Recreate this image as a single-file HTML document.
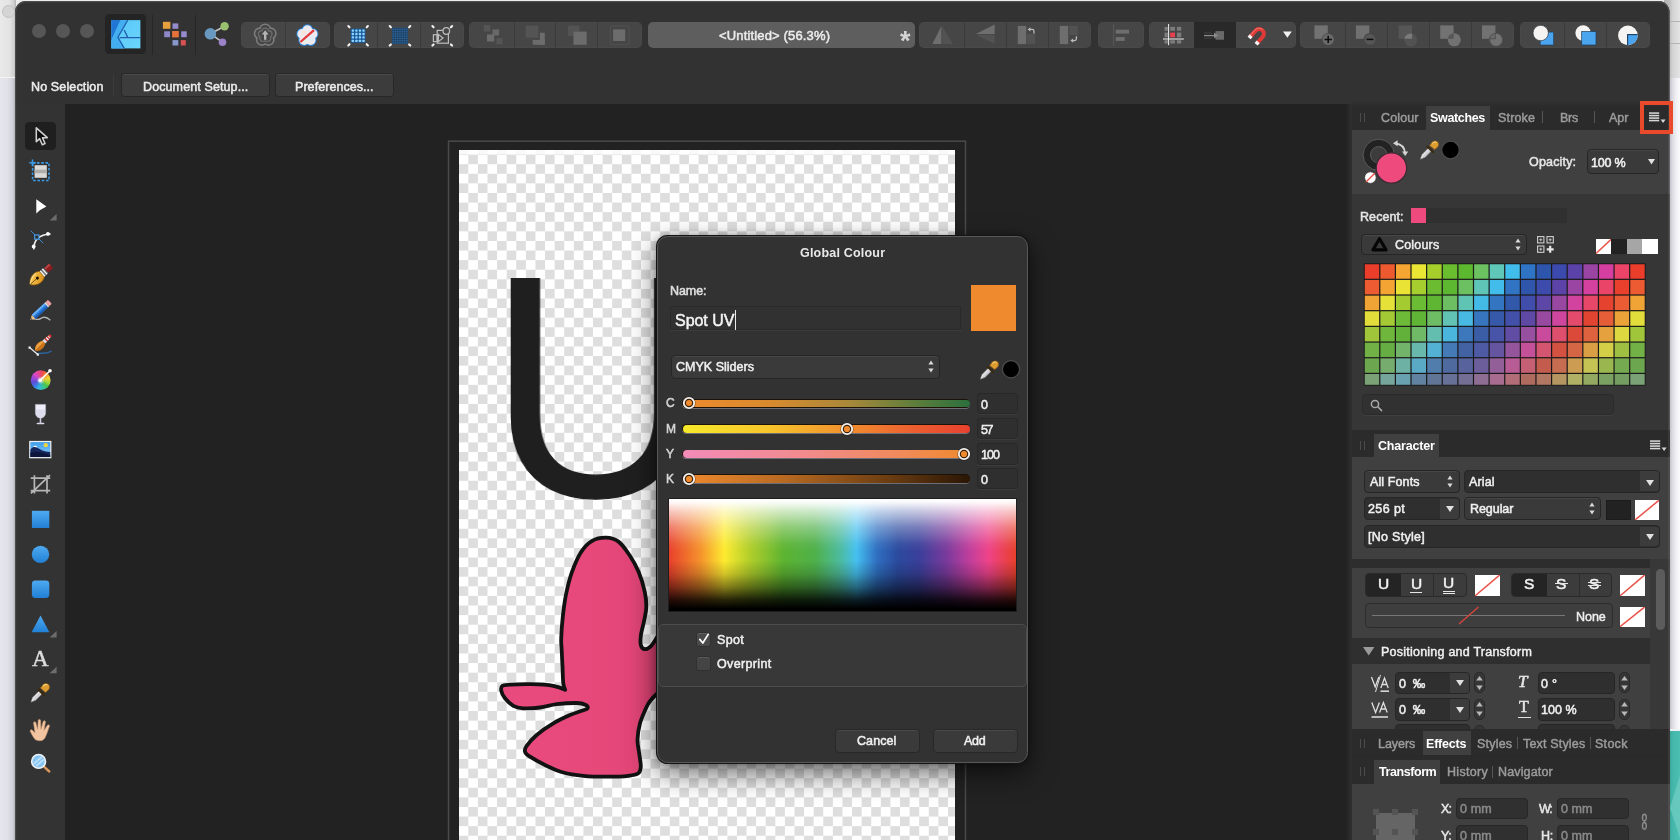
<!DOCTYPE html>
<html><head><meta charset="utf-8"><title>Global Colour</title>
<style>
html,body{margin:0;padding:0;}
body{width:1680px;height:840px;overflow:hidden;position:relative;background:#ececec;font-family:"Liberation Sans",sans-serif;}
#bg,#w{position:absolute;left:0;top:0;width:1680px;height:840px;overflow:hidden;}
#w{clip-path:inset(1px 10.5px 0 15px round 11px 11px 0 0);background:#323232;}
#w div,#bg div,#ov div{position:absolute;box-sizing:border-box;}
#ov{position:absolute;left:0;top:0;width:1680px;height:840px;pointer-events:none;}
.t{position:absolute;white-space:nowrap;display:block;will-change:transform;}
svg{position:absolute;overflow:visible;}
.btn{background:#464646;}
.fld{background:#2b2b2b;border:1px solid #232323;border-radius:3px;box-shadow:0 1px 0 rgba(255,255,255,0.06);}
.dd{background:#3a3a3a;border:1px solid #262626;border-radius:4px;box-shadow:inset 0 1px 0 rgba(255,255,255,0.07);}
</style></head><body>
<div id="bg">
<div style="left:0px;top:0px;width:16px;height:840px;background:linear-gradient(90deg,#e6e6ee 0%,#e0e0e8 50%,#cfcfd7 80%,#a8a8b0 100%);"></div>
<div style="left:0px;top:0px;width:16px;height:77.5px;background:linear-gradient(90deg,#e9e9e9 0%,#e3e3e3 60%,#cfcfcf 86%,#b2b2b2 100%);border-bottom:1.5px solid #f2f2f2;"></div>
<div style="left:2.3px;top:4.8px;width:13.2px;height:13.2px;width:13.2px;border-radius:50%;background:#d4d4d4;border:1px solid #c2c2c2;"></div>
<div style="left:1664px;top:0px;width:16px;height:840px;background:linear-gradient(90deg,#b4b4bc 0%,#c2c2ca 36%,#dedee6 55%,#f2f2f6 80%,#fafafc 100%);"></div>
<div style="left:1664px;top:0px;width:16px;height:77.5px;background:linear-gradient(90deg,#b0b0b0 0%,#bdbdbd 36%,#d4d4d4 55%,#e4e4e4 100%);"></div>
<div style="left:1664px;top:20.5px;width:16px;height:1px;background:#b4b4b4;"></div>
<div style="left:1664px;top:43px;width:16px;height:1px;background:#b4b4b4;"></div>
<div style="left:1664px;top:728.5px;width:16px;height:2.5px;background:#f0f0f2;"></div>
<div style="left:1664px;top:731px;width:16px;height:109px;background:linear-gradient(90deg,#2c8a80 0%,#3aa89c 36%,#44b6aa 55%,#4cbeb2 100%);"></div>
<svg style="left:1664px;top:731px" width="16" height="109" viewBox="1664 731 16 109"><path d="M1680 775L1670 808L1680 838Z" fill="#74cec4" opacity="0.7"/></svg>
</div>
<div id="w">
<div style="left:15px;top:0px;width:1654.5px;height:104px;background:#323232;"></div>
<div style="left:32px;top:24.4px;width:14px;height:14px;border-radius:50%;background:#565656;"></div>
<div style="left:56.3px;top:24.4px;width:14px;height:14px;border-radius:50%;background:#565656;"></div>
<div style="left:80.3px;top:24.4px;width:14px;height:14px;border-radius:50%;background:#565656;"></div>
<div style="left:105.4px;top:13.8px;width:40.4px;height:40px;background:#242424;border-radius:4.5px;"></div>
<div style="left:151.8px;top:15px;width:1px;height:39.5px;background:#262626;"></div>
<div style="left:195.3px;top:15px;width:1px;height:39.5px;background:#262626;"></div>
<div style="left:240.5px;top:22.1px;width:89.5px;height:26px;background:#464646;border-radius:5px;box-shadow:inset 0 0 0 0.5px rgba(255,255,255,0.04);"></div>
<div style="left:285.2px;top:22.1px;width:1px;height:26px;background:#3a3a3a;"></div>
<div style="left:333.8px;top:22.1px;width:130px;height:26px;background:#464646;border-radius:5px;box-shadow:inset 0 0 0 0.5px rgba(255,255,255,0.04);"></div>
<div style="left:377.4px;top:22.1px;width:1px;height:26px;background:#3a3a3a;"></div>
<div style="left:419.9px;top:22.1px;width:1px;height:26px;background:#3a3a3a;"></div>
<div style="left:469.4px;top:22.1px;width:172.9px;height:26px;background:#464646;border-radius:5px;box-shadow:inset 0 0 0 0.5px rgba(255,255,255,0.04);"></div>
<div style="left:513.5px;top:22.1px;width:1px;height:26px;background:#3a3a3a;"></div>
<div style="left:555.4px;top:22.1px;width:1px;height:26px;background:#3a3a3a;"></div>
<div style="left:597.2px;top:22.1px;width:1px;height:26px;background:#3a3a3a;"></div>
<div style="left:648px;top:22.1px;width:267.3px;height:26px;background:#5e5e5e;border-radius:5px;"></div>
<div style="left:919.2px;top:22.1px;width:172.3px;height:26px;background:#464646;border-radius:5px;box-shadow:inset 0 0 0 0.5px rgba(255,255,255,0.04);"></div>
<div style="left:963.5px;top:22.1px;width:1px;height:26px;background:#3a3a3a;"></div>
<div style="left:1006.1px;top:22.1px;width:1px;height:26px;background:#3a3a3a;"></div>
<div style="left:1048.1px;top:22.1px;width:1px;height:26px;background:#3a3a3a;"></div>
<div style="left:1097.5px;top:22.1px;width:46.2px;height:26px;background:#464646;border-radius:5px;box-shadow:inset 0 0 0 0.5px rgba(255,255,255,0.04);"></div>
<div style="left:1148.8px;top:22.1px;width:147.6px;height:26px;background:#464646;border-radius:5px;box-shadow:inset 0 0 0 0.5px rgba(255,255,255,0.04);"></div>
<div style="left:1193.5px;top:22.1px;width:1px;height:26px;background:#3a3a3a;"></div>
<div style="left:1235px;top:22.1px;width:1px;height:26px;background:#3a3a3a;"></div>
<div style="left:1194px;top:22.1px;width:41.5px;height:26px;background:#292929;"></div>
<div style="left:1300.4px;top:22.1px;width:214.1px;height:26px;background:#464646;border-radius:5px;box-shadow:inset 0 0 0 0.5px rgba(255,255,255,0.04);"></div>
<div style="left:1344.7px;top:22.1px;width:1px;height:26px;background:#3a3a3a;"></div>
<div style="left:1386.9px;top:22.1px;width:1px;height:26px;background:#3a3a3a;"></div>
<div style="left:1429px;top:22.1px;width:1px;height:26px;background:#3a3a3a;"></div>
<div style="left:1470.9px;top:22.1px;width:1px;height:26px;background:#3a3a3a;"></div>
<div style="left:1519.8px;top:22.1px;width:130.4px;height:26px;background:#464646;border-radius:5px;box-shadow:inset 0 0 0 0.5px rgba(255,255,255,0.04);"></div>
<div style="left:1564px;top:22.1px;width:1px;height:26px;background:#3a3a3a;"></div>
<div style="left:1605.9px;top:22.1px;width:1px;height:26px;background:#3a3a3a;"></div>
<span id="t1" class="t" style="left:719px;top:26.9px;height:17px;line-height:17px;font-size:13px;color:#ececec;font-weight:400;letter-spacing:0.153px;-webkit-text-stroke:0.5px #ececec;">&lt;Untitled&gt; (56.3%)</span>
<span id="t2" class="t" style="left:899.8px;top:23.5px;height:35px;line-height:35px;font-size:27px;color:#d4d4d4;font-weight:700;letter-spacing:0.000px;">*</span>
<svg style="left:0;top:0" width="1680" height="70" viewBox="0 0 1680 70"><defs><clipPath id="ic3"><circle cx="1627.9" cy="35.4" r="9.8"/></clipPath><linearGradient id="adg" x1="0" y1="0" x2="1" y2="1"><stop offset="0" stop-color="#58c4f6"/><stop offset="1" stop-color="#6ad6fc"/></linearGradient></defs><rect x="111.3" y="20.1" width="29.1" height="28.3" fill="url(#adg)"/><path d="M111.3 20.1H120.6L111.3 40.6Z" fill="#2277d4"/><path d="M120.6 20.1H127.7L117.9 37.3L124.3 48.4H111.3V40.6Z" fill="#43aef0"/><path d="M127.7 20.3L117.9 37.3L124.3 48.4" fill="none" stroke="#1d5fae" stroke-width="1.3"/><path d="M119.6 37.6H140.4M124.2 30L127.8 37.6" fill="none" stroke="#1d5fae" stroke-width="1.3"/><rect x="162.9" y="21.8" width="7.5" height="7.0" fill="#e6a03e"/><rect x="172.5" y="23.4" width="5.8" height="5.4" fill="#968ccc"/><rect x="164.2" y="31.3" width="5.8" height="5.9" fill="#8f88c8"/><rect x="172.1" y="31" width="6.7" height="6.4" fill="#e6723a"/><rect x="181.2" y="31.3" width="5.5" height="5.9" fill="#968ccc"/><rect x="172.5" y="40.1" width="5.8" height="5.4" fill="#8898cc"/><rect x="180.8" y="40.1" width="5.0" height="5.4" fill="#d65252"/><path d="M210.4 33.8L224.6 26.3M210.4 33.8L222.5 42.2" stroke="#c4c4c4" stroke-width="1.6"/><circle cx="210.4" cy="33.8" r="5.8" fill="#6898c0"/><circle cx="224.6" cy="26.3" r="4.2" fill="#98c06e"/><circle cx="222.5" cy="42.2" r="3.8" fill="#9a82c8"/><g fill="#464646" stroke="#7c7c7c" stroke-width="3.2"><circle cx="265.2" cy="29.6" r="4.6"/><circle cx="270.5" cy="33.5" r="4.6"/><circle cx="268.5" cy="39.7" r="4.6"/><circle cx="261.9" cy="39.7" r="4.6"/><circle cx="259.9" cy="33.5" r="4.6"/></g><g fill="#464646"><circle cx="265.2" cy="29.6" r="4.6"/><circle cx="270.5" cy="33.5" r="4.6"/><circle cx="268.5" cy="39.7" r="4.6"/><circle cx="261.9" cy="39.7" r="4.6"/><circle cx="259.9" cy="33.5" r="4.6"/><circle cx="265.2" cy="35.2" r="5"/></g><g fill="none" stroke="#6c6c6c" stroke-width="1.6"><circle cx="265.2" cy="31.6" r="3.2"/><circle cx="268.6" cy="34.1" r="3.2"/><circle cx="267.3" cy="38.1" r="3.2"/><circle cx="263.1" cy="38.1" r="3.2"/><circle cx="261.8" cy="34.1" r="3.2"/></g><g fill="#464646"><circle cx="265.2" cy="31.6" r="2.7"/><circle cx="268.6" cy="34.1" r="2.7"/><circle cx="267.3" cy="38.1" r="2.7"/><circle cx="263.1" cy="38.1" r="2.7"/><circle cx="261.8" cy="34.1" r="2.7"/><circle cx="265.2" cy="35.2" r="3.4"/></g><path d="M265.2 30.2L268.6 34.6H266.4V39.8H264V34.6H261.8Z" fill="#b4b4b4"/><g fill="#2a86d8"><circle cx="307.4" cy="30.2" r="5.9"/><circle cx="312.5" cy="33.9" r="5.9"/><circle cx="310.6" cy="40.0" r="5.9"/><circle cx="304.2" cy="40.0" r="5.9"/><circle cx="302.3" cy="33.9" r="5.9"/></g><g fill="#eeeaf0"><circle cx="307.4" cy="30.2" r="4.9"/><circle cx="312.5" cy="33.9" r="4.9"/><circle cx="310.6" cy="40.0" r="4.9"/><circle cx="304.2" cy="40.0" r="4.9"/><circle cx="302.3" cy="33.9" r="4.9"/><circle cx="307.4" cy="35.6" r="5.5"/></g><circle cx="303.4" cy="32.6" r="2.6" fill="#f8e4d8" opacity="0.8"/><circle cx="311.2" cy="38.6" r="2.6" fill="#dcecf8" opacity="0.8"/><circle cx="305" cy="40.4" r="2.2" fill="#e2f4e2" opacity="0.8"/><path d="M300.4 42L314 30.2" stroke="#e23a3a" stroke-width="2.3"/><rect x="350.8" y="28.6" width="14.6" height="14.2" fill="#185a9c"/><rect x="351.70" y="29.40" width="2.3" height="2.3" rx="0.6" fill="#8fd4ff"/><rect x="351.70" y="32.85" width="2.3" height="2.3" rx="0.6" fill="#8fd4ff"/><rect x="351.70" y="36.30" width="2.3" height="2.3" rx="0.6" fill="#8fd4ff"/><rect x="351.70" y="39.75" width="2.3" height="2.3" rx="0.6" fill="#8fd4ff"/><rect x="355.25" y="29.40" width="2.3" height="2.3" rx="0.6" fill="#8fd4ff"/><rect x="355.25" y="32.85" width="2.3" height="2.3" rx="0.6" fill="#8fd4ff"/><rect x="355.25" y="36.30" width="2.3" height="2.3" rx="0.6" fill="#8fd4ff"/><rect x="355.25" y="39.75" width="2.3" height="2.3" rx="0.6" fill="#8fd4ff"/><rect x="358.80" y="29.40" width="2.3" height="2.3" rx="0.6" fill="#8fd4ff"/><rect x="358.80" y="32.85" width="2.3" height="2.3" rx="0.6" fill="#8fd4ff"/><rect x="358.80" y="36.30" width="2.3" height="2.3" rx="0.6" fill="#8fd4ff"/><rect x="358.80" y="39.75" width="2.3" height="2.3" rx="0.6" fill="#8fd4ff"/><rect x="362.35" y="29.40" width="2.3" height="2.3" rx="0.6" fill="#8fd4ff"/><rect x="362.35" y="32.85" width="2.3" height="2.3" rx="0.6" fill="#8fd4ff"/><rect x="362.35" y="36.30" width="2.3" height="2.3" rx="0.6" fill="#8fd4ff"/><rect x="362.35" y="39.75" width="2.3" height="2.3" rx="0.6" fill="#8fd4ff"/><path d="M349.5 27.3L348.3 26.1M366.7 27.3L367.9 26.1M349.5 44.2L348.3 45.4M366.7 44.2L367.9 45.4" stroke="#f2f2f2" stroke-width="2.1" stroke-linecap="round"/><rect x="392" y="27.8" width="16" height="16.2" fill="#3178b8"/><path d="M392.90 27.8V44M392 28.70H408M394.68 27.8V44M392 30.50H408M396.46 27.8V44M392 32.30H408M398.24 27.8V44M392 34.10H408M400.02 27.8V44M392 35.90H408M401.80 27.8V44M392 37.70H408M403.58 27.8V44M392 39.50H408M405.36 27.8V44M392 41.30H408M407.14 27.8V44M392 43.10H408" stroke="#1c3048" stroke-width="0.8" opacity="0.8"/><path d="M390.9 27.3L389.7 26.1M409.1 27.3L410.3 26.1M390.9 44.4L389.7 45.6M409.1 44.4L410.3 45.6" stroke="#f2f2f2" stroke-width="2.1" stroke-linecap="round"/><g fill="none" stroke="#bdbdbd" stroke-width="1.2"><rect x="437.2" y="30.4" width="11.2" height="12.8"/><rect x="433.4" y="34.8" width="3.8" height="6.8"/><circle cx="446.3" cy="31" r="3.3" fill="#464646"/><path d="M438.4 34.4V41.6L443 38Z"/></g><path d="M433.6 27.3L432.4 26.1M450.9 27.3L452.1 26.1M433.6 44.4L432.4 45.6M450.9 44.4L452.1 45.6" stroke="#f2f2f2" stroke-width="2.1" stroke-linecap="round"/><rect x="483.7" y="25" width="6.6" height="6.6" fill="#555"/><rect x="496.4" y="38.2" width="6.0" height="6.1" fill="#555"/><rect x="492.5" y="29.4" width="6.6" height="6.1" fill="#686868"/><rect x="487" y="34.4" width="7.2" height="7.1" fill="#6c6c6c"/><rect x="525.6" y="25.6" width="12.6" height="12.1" fill="#545454"/><rect x="532.7" y="39.9" width="12.1" height="4.9" fill="#6c6c6c"/><rect x="539.9" y="32.7" width="4.9" height="12.1" fill="#6c6c6c"/><rect x="568" y="25.6" width="11.5" height="10.4" fill="#535353"/><rect x="573.5" y="31.6" width="13.2" height="13.2" fill="#6c6c6c"/><rect x="613.1" y="29.4" width="12.1" height="11.6" fill="#6c6c6c"/><rect x="610.6" y="26" width="18.4" height="18.6" fill="none" stroke="#505050" stroke-width="1"/><path d="M941.4 25.9V44.1H932.4Z" fill="#6e6e6e"/><path d="M942.2 25.9V44.1H953Z" fill="#525252"/><path d="M994.7 24.5V33.9H975.8Z" fill="#6e6e6e"/><path d="M975.8 34.7H994.7V44Z" fill="#525252"/><rect x="1017.8" y="25.9" width="8.4" height="18.2" fill="#6e6e6e"/><rect x="1026.9" y="33.8" width="8.4" height="10.3" fill="#525252"/><path d="M1034 33.6V31.2C1034 30 1033.4 29.4 1032.2 29.4H1029.6" fill="none" stroke="#bcbcbc" stroke-width="1.3"/><path d="M1027.6 29.4L1030.4 27.2V31.6Z" fill="#bcbcbc"/><rect x="1059.8" y="25.9" width="8.4" height="18.2" fill="#6e6e6e"/><rect x="1069.5" y="25.9" width="8.4" height="9.2" fill="#525252"/><path d="M1076.4 36.2V38.8C1076.4 40 1075.8 40.6 1074.6 40.6H1072.4" fill="none" stroke="#bcbcbc" stroke-width="1.3"/><path d="M1070.4 40.6L1073.2 38.4V42.8Z" fill="#bcbcbc"/><rect x="1113.2" y="24.5" width="0.9" height="21" fill="#5c5c5c"/><rect x="1115.7" y="29.7" width="13.3" height="3.9" fill="#6e6e6e"/><rect x="1115.7" y="37.1" width="9.1" height="3.8" fill="#6e6e6e"/><rect x="1164.5" y="26.9" width="3.4" height="3.8" fill="#7c7c7c"/><rect x="1164.5" y="32.6" width="3.4" height="4.7" fill="#7c7c7c"/><rect x="1164.5" y="40.2" width="3.4" height="3.3" fill="#7c7c7c"/><rect x="1170.2" y="26.9" width="4.8" height="3.8" fill="#7c7c7c"/><rect x="1170.2" y="32.6" width="4.8" height="4.7" fill="#e8404e"/><rect x="1170.2" y="40.2" width="4.8" height="3.3" fill="#7c7c7c"/><rect x="1176.9" y="26.9" width="4.3" height="3.8" fill="#7c7c7c"/><rect x="1176.9" y="32.6" width="4.3" height="4.7" fill="#7c7c7c"/><rect x="1176.9" y="40.2" width="4.3" height="3.3" fill="#7c7c7c"/><path d="M1168.6 24V45.2M1163 39H1183.8" stroke="#f0f0f0" stroke-width="1"/><rect x="1215.5" y="31.1" width="8.5" height="8.6" fill="#6a6a6a"/><path d="M1204 35.6H1215" stroke="#8a8a8a" stroke-width="1.3"/><path d="M1204 33H1212M1204 38.2H1212" stroke="#4a4a4a" stroke-width="0.8"/><path d="M1214 32.6L1218 35.6L1214 38.6Z" fill="#8a8a8a"/><g transform="rotate(42 1258.5 34.5)"><path d="M1251.8 42.5V33.5A6.7 6.7 0 0 1 1265.2 33.5V42.5H1261.2V33.5A2.7 2.7 0 0 0 1255.8 33.5V42.5Z" fill="#e03a36"/><path d="M1252.9 42.5V33.5A5.6 5.6 0 0 1 1258.5 27.9" fill="none" stroke="#f07068" stroke-width="1"/><rect x="1251.8" y="40.2" width="4" height="3.2" fill="#f4f4f4"/><rect x="1261.2" y="40.2" width="4" height="3.2" fill="#f4f4f4"/></g><path d="M1283 31.6H1291.8L1287.4 37.8Z" fill="#f2f2f2"/><rect x="1314.4" y="25.4" width="13.4" height="13.4" fill="#727272"/><circle cx="1328.2" cy="39.4" r="6" fill="#6a6a6a" stroke="#464646" stroke-width="0.8"/><path d="M1328.2 35.8V43M1324.6 39.4H1331.8" stroke="#0c0c0c" stroke-width="1.5"/><rect x="1355.9" y="25.4" width="13.4" height="13.4" fill="#707070"/><circle cx="1370" cy="39.4" r="6.4" fill="#464646"/><circle cx="1370" cy="39.4" r="5.4" fill="#565656"/><path d="M1366.6 39.4H1373.4" stroke="#0c0c0c" stroke-width="1.5"/><rect x="1398.7" y="25.4" width="13.4" height="13.4" fill="#565656"/><circle cx="1410.8" cy="40.1" r="6.5" fill="#525252"/><path d="M1404.3 38.8A6.5 6.5 0 0 1 1412.1 33.7V38.8Z" fill="#7a7a7a"/><rect x="1440.2" y="25.4" width="13.4" height="13.4" fill="#727272"/><circle cx="1454.3" cy="39.8" r="6.5" fill="#727272"/><path d="M1447.9 38.8A6.5 6.5 0 0 1 1453.6 33.3V38.8Z" fill="#565656"/><rect x="1482" y="25.4" width="13.4" height="13.4" fill="#727272"/><circle cx="1496.1" cy="39.8" r="6.5" fill="#727272" stroke="#4c4c4c" stroke-width="0.8"/><path d="M1489.7 38.8A6.5 6.5 0 0 1 1495.4 33.3V38.8Z" fill="#6a6a6a" stroke="#4c4c4c" stroke-width="0.8"/><rect x="1540.2" y="32.1" width="13.4" height="12.9" fill="#4aa4ee" stroke="#1c3c5c" stroke-width="0.6"/><circle cx="1540.7" cy="33" r="7.7" fill="#f6f4f2" stroke="#33373c" stroke-width="0.7"/><circle cx="1583.1" cy="33" r="7.7" fill="#f6f4f2"/><rect x="1581.7" y="31.6" width="14.3" height="13.4" fill="#4aa4ee" stroke="#1c3c5c" stroke-width="0.7"/><circle cx="1627.9" cy="35.4" r="9.8" fill="#f6f4f2"/><g clip-path="url(#ic3)"><rect x="1627.6" y="34.6" width="14" height="14" fill="#4aa4ee" stroke="#1c3c5c" stroke-width="1.1"/></g></svg>
<span id="t3" class="t" style="left:31px;top:78.7px;height:16px;line-height:16px;font-size:12.5px;color:#ececec;font-weight:400;letter-spacing:0.139px;-webkit-text-stroke:0.5px #ececec;">No Selection</span>
<div style="left:113px;top:75px;width:1px;height:22px;background:#3c3c3c;"></div>
<div style="left:121px;top:72.9px;width:149px;height:23.9px;background:#3c3c3c;border:1px solid #272727;border-radius:3.5px;box-shadow:inset 0 1px 0 rgba(255,255,255,0.08);"></div>
<div style="left:274.5px;top:72.9px;width:119.8px;height:23.9px;background:#3c3c3c;border:1px solid #272727;border-radius:3.5px;box-shadow:inset 0 1px 0 rgba(255,255,255,0.08);"></div>
<span id="t4" class="t" style="left:142.9px;top:78.8px;height:16px;line-height:16px;font-size:12.5px;color:#ececec;font-weight:400;letter-spacing:0.111px;-webkit-text-stroke:0.5px #ececec;">Document Setup...</span>
<span id="t5" class="t" style="left:294.9px;top:78.8px;height:16px;line-height:16px;font-size:12.5px;color:#ececec;font-weight:400;letter-spacing:0.059px;-webkit-text-stroke:0.5px #ececec;">Preferences...</span>
<div style="left:15px;top:104px;width:50px;height:736px;background:#333333;"></div>
<div style="left:24.7px;top:122px;width:31.5px;height:27.8px;background:#1f1f1f;border-radius:4.5px;"></div>
<svg style="left:15px;top:104px" width="50" height="736" viewBox="15 104 50 736"><defs><linearGradient id="bl" x1="0" y1="0" x2="0" y2="1"><stop offset="0" stop-color="#4eaaf0"/><stop offset="1" stop-color="#2280d6"/></linearGradient><linearGradient id="gold" x1="0" y1="0" x2="1" y2="1"><stop offset="0" stop-color="#ffd866"/><stop offset="1" stop-color="#d88a10"/></linearGradient><linearGradient id="sky" x1="0" y1="0" x2="0" y2="1"><stop offset="0" stop-color="#3c9cea"/><stop offset="1" stop-color="#8fd0f8"/></linearGradient></defs><path d="M36.3 127.9V141.7L39.7 138.7L42.3 144.7L45 143.5L42.5 137.7H47.3Z" fill="#0c0c0c" stroke="#cfcfcf" stroke-width="1.6" stroke-linejoin="round"/><rect x="32.6" y="162.9" width="16.4" height="17.6" fill="none" stroke="#3b9ae6" stroke-width="1.6" stroke-dasharray="2.6 1.7"/><rect x="34.6" y="165.2" width="12.2" height="12.6" fill="#dcdad8"/><rect x="34.6" y="169.6" width="12.2" height="3.6" fill="#aeaeae"/><path d="M32.5 159.6v6.4M29.3 162.8h6.4" stroke="#3b9ae6" stroke-width="1.6"/><path d="M36.3 199.2V213.4L39.8 210.2L46.4 206.4Z" fill="#fff"/><path d="M49.6 220.4h7v-6.4z" fill="#6c6c6c"/><path d="M30.7 230.6L43.2 243.1" stroke="#3f8fd8" stroke-width="1"/><path d="M33.8 249.5C33.6 240 38 234.4 50.6 233.9" fill="none" stroke="#f0f0f0" stroke-width="1.5"/><circle cx="47.9" cy="233.9" r="1.9" fill="#fff"/><circle cx="33.7" cy="246.5" r="1.9" fill="#fff"/><rect x="34.7" y="235" width="4.2" height="4.2" fill="#2a2a2a" stroke="#4a9be6" stroke-width="1.2"/><g transform="translate(40.85,275) rotate(-41.5)"><path d="M-14.5 0C-11 -4.6 -6.5 -6.2 -2.5 -5.4C-0.5 -5 0.8 -4.2 1.4 -3.4V3.4C0.8 4.2 -0.5 5 -2.5 5.4C-6.5 6.2 -11 4.6 -14.5 0Z" fill="url(#gold)" stroke="#96600c" stroke-width="0.7"/><path d="M-14 -0.4C-10 -3.6 -6 -4.8 -2.5 -4.4" fill="none" stroke="#fff0a8" stroke-width="1" opacity="0.8"/><path d="M-14 0H-5.5" stroke="#5a3806" stroke-width="0.7"/><circle cx="-4.6" cy="0" r="1.5" fill="#1a1206"/><rect x="1.6" y="-3.6" width="1.6" height="7.2" fill="#f4f4f4"/><rect x="3.2" y="-3.6" width="1.2" height="7.2" fill="#777"/><rect x="4.4" y="-3.6" width="1.6" height="7.2" fill="#f4f4f4"/><rect x="6" y="-3.4" width="1.1" height="6.8" fill="#666"/><rect x="7.1" y="-3" width="6.8" height="6" rx="1.2" fill="#8e1e1e"/><rect x="7.1" y="-3" width="6.8" height="2" rx="1" fill="#b84444"/></g><path d="M30.5 319.8C34 316.5 36.5 321.5 40.5 318.6C43.6 316.3 46.5 316.6 50.4 320.2" fill="none" stroke="#b4b4b4" stroke-width="1.3"/><g transform="rotate(-43 40 311)"><path d="M27 311L31.5 308.2V313.8Z" fill="#f0c080"/><path d="M27 311L28.8 309.9V312.1Z" fill="#333"/><rect x="31.5" y="308.2" width="17" height="5.6" fill="#2c7ede"/><rect x="31.5" y="308.2" width="17" height="1.9" fill="#6ab2f6"/><rect x="31.5" y="312" width="17" height="1.8" fill="#1c5cb0"/><rect x="48.5" y="308.2" width="1.6" height="5.6" fill="#e0e0e0"/><rect x="50.1" y="308.2" width="3.4" height="5.6" rx="1" fill="#f0a0a0"/></g><path d="M37.8 354.2C41 351.4 44 355.4 51.6 351.2" fill="none" stroke="#2c65a0" stroke-width="1.5"/><path d="M29.6 347.6L37.8 354.6" stroke="#e8e8e8" stroke-width="1.3"/><rect x="28.5" y="346.5" width="2.2" height="2.2" fill="#f4f4f4"/><rect x="36.7" y="353.5" width="2.2" height="2.2" fill="#f4f4f4"/><g transform="translate(43,343) rotate(-45)"><path d="M-10.8 0C-8.5 -4.2 -2.5 -4.6 1.2 -2V2C-2.5 4.6 -8.5 4.2 -10.8 0Z" fill="#c8721a"/><path d="M-10.6 -0.2C-8.5 -3.6 -2.5 -4 1.2 -1.8V-0.2Z" fill="#eca040"/><rect x="1.2" y="-2" width="2.8" height="4" fill="#dcdcdc"/><path d="M4 -1.9L11.2 -1.3V1.3L4 1.9Z" fill="#d83434"/><rect x="5.4" y="-1.8" width="1.2" height="3.6" fill="#f4f4f4"/><rect x="8" y="-1.6" width="1" height="3.2" fill="#f4f4f4" opacity="0.8"/></g><defs><clipPath id="wcl"><circle cx="40.7" cy="380.2" r="9.9"/></clipPath><filter id="wbl" x="-20%" y="-20%" width="140%" height="140%"><feGaussianBlur stdDeviation="1.1"/></filter></defs><g clip-path="url(#wcl)"><g filter="url(#wbl)"><path d="M40.70 380.20L40.52 367.20A13.0 13.0 0 0 1 47.36 369.03Z" fill="#f24a4a"/><path d="M40.70 380.20L47.04 368.85A13.0 13.0 0 0 1 52.05 373.86Z" fill="#f88a30"/><path d="M40.70 380.20L51.87 373.54A13.0 13.0 0 0 1 53.70 380.38Z" fill="#f6d830"/><path d="M40.70 380.20L53.70 380.02A13.0 13.0 0 0 1 51.87 386.86Z" fill="#a8dc38"/><path d="M40.70 380.20L52.05 386.54A13.0 13.0 0 0 1 47.04 391.55Z" fill="#44c848"/><path d="M40.70 380.20L47.36 391.37A13.0 13.0 0 0 1 40.52 393.20Z" fill="#38c8a0"/><path d="M40.70 380.20L40.88 393.20A13.0 13.0 0 0 1 34.04 391.37Z" fill="#38b8e8"/><path d="M40.70 380.20L34.36 391.55A13.0 13.0 0 0 1 29.35 386.54Z" fill="#3c78e8"/><path d="M40.70 380.20L29.53 386.86A13.0 13.0 0 0 1 27.70 380.02Z" fill="#5c50e0"/><path d="M40.70 380.20L27.70 380.38A13.0 13.0 0 0 1 29.53 373.54Z" fill="#9848dc"/><path d="M40.70 380.20L29.35 373.86A13.0 13.0 0 0 1 34.36 368.85Z" fill="#d848cc"/><path d="M40.70 380.20L34.04 369.03A13.0 13.0 0 0 1 40.88 367.20Z" fill="#f04890"/></g></g><circle cx="40.7" cy="380.2" r="3.5" fill="#fff" opacity="0.3"/><path d="M40.2 380.4L50 370.8" stroke="#fff" stroke-width="1.5"/><circle cx="40.2" cy="380.4" r="1.8" fill="#fff"/><circle cx="50" cy="370.8" r="1.8" fill="#fff"/><path d="M35.4 404.4H45.6V412.5C45.6 416 43.4 418 40.5 418C37.6 418 35.4 416 35.4 412.5Z" fill="#eeeef8" stroke="#b8b8cc" stroke-width="0.6"/><path d="M36 409.5H45V412.5C45 415.6 43.2 417.4 40.5 417.4C37.8 417.4 36 415.6 36 412.5Z" fill="#dcdcec"/><rect x="39.7" y="418" width="1.6" height="5.2" fill="#c8c8d8"/><rect x="36.6" y="422.8" width="7.8" height="1.5" rx="0.7" fill="#d8d8e4"/><rect x="29.8" y="441.5" width="21" height="16.2" fill="url(#sky)" stroke="#f0f0f0" stroke-width="1.2"/><path d="M30.4 449.5C33 446.5 35 446 37.5 447.8C40 449.6 44 451.6 50.2 452V457.1H30.4Z" fill="#16275c"/><path d="M30.4 452.5C36 451 42 452.5 50.2 455V457.1H30.4Z" fill="#0c163c"/><path d="M33 446.8C34.5 445.4 36.2 445.6 37.6 447.2C36 447.2 34.6 447.4 33 446.8Z" fill="#fff"/><circle cx="45.8" cy="445.2" r="2.1" fill="#f4d43c"/><g stroke="#b6b6b6" stroke-width="1.7" fill="none"><path d="M34.4 475.3V493.6M47 475.3V493.6M30.7 478.2H50.2M30.7 490.6H50.2M50 475.2L30.9 493.4"/></g><rect x="31.9" y="510.8" width="17.4" height="17.2" fill="url(#bl)"/><circle cx="40.5" cy="554.4" r="8.7" fill="url(#bl)"/><rect x="31.9" y="580.5" width="17.4" height="17.4" rx="3.4" fill="url(#bl)"/><path d="M40.5 615.6L49.4 632.2H31.6Z" fill="url(#bl)"/><path d="M49.6 637.4h7v-6.4z" fill="#6c6c6c"/><path d="M49.6 673.2h7v-6.4z" fill="#6c6c6c"/><g transform="translate(30.6,682.6) scale(1.02)"><path d="M0.4 19.2L2 14.4L9 7.4L12 10.4L5 17.4z" fill="#d2d2d6" stroke="#7c7c80" stroke-width="0.6"/><path d="M1.2 18.2L3 14.8L9.4 8.4" fill="none" stroke="#fff" stroke-width="0.9" opacity="0.8"/><path d="M7.6 6.6L13 12" stroke="#3a2a10" stroke-width="2.2" stroke-linecap="round"/><path d="M9.6 5.4L11.4 3.2C12.4 1 15.2 0.2 17.2 1.6C19.2 3 19 6 17.2 7.4L14.6 9.6z" fill="#dc9c30" stroke="#8a5a14" stroke-width="0.6"/><path d="M12.4 3.4C13.4 2 15 1.6 16.2 2.2" fill="none" stroke="#ffe08a" stroke-width="1" stroke-linecap="round"/></g><path d="M35.2 739.6C32.8 736.4 31.4 733.6 30.3 731.4C29.8 730 31.4 729.2 32.4 730.2L35 732.8L33.6 723.2C33.4 721.6 35.4 721.2 35.9 722.8L37.6 729.4L38.2 720.6C38.3 719 40.5 719 40.6 720.6L41 729.2L43.2 721.6C43.7 720 45.7 720.5 45.4 722.2L44 730.4L47.3 725.4C48.2 724.1 50 725 49.4 726.6C47.8 730.6 47 733.6 45.6 736.6C44.8 738.4 44 739.4 42.6 740.2C40.4 741 37 740.9 35.2 739.6Z" fill="#f2c4a0" stroke="#c89470" stroke-width="0.6"/><path d="M43.6 766.4L49.3 771.5" stroke="#d8965c" stroke-width="2.4" stroke-linecap="round"/><circle cx="38.6" cy="761.4" r="6.9" fill="#86c4f2" stroke="#eef2f6" stroke-width="1.6"/><path d="M34.2 763.4L41.6 757.2M36.8 765.4L43.2 760" stroke="#c8e6fa" stroke-width="1.7" fill="none" stroke-linecap="round" opacity="0.85"/></svg>
<span id="t6" class="t" style="left:32.4px;top:644px;height:30px;line-height:30px;font-size:23px;color:#dcdcdc;font-weight:400;letter-spacing:0.000px;font-family:&quot;Liberation Serif&quot;,serif;-webkit-text-stroke:0.5px #dcdcdc;">A</span>
<div style="left:65px;top:104px;width:1284px;height:736px;background:#222222;"></div>
<svg style="left:440px;top:135px" width="540" height="710" viewBox="440 135 540 710"><rect x="448.5" y="141.2" width="517" height="720" fill="none" stroke="#4a4a4a" stroke-width="1.5"/></svg>
<div style="left:459px;top:150px;width:496px;height:695px;background-color:#fff;background-image:conic-gradient(#dedede 25%,#fff 0 50%,#dedede 0 75%,#fff 0);background-size:19.2px 19.2px;background-position:-0.3px 4.6px;overflow:hidden;"><div style="left:0;top:0;width:496px;height:4.4px;background:rgba(255,255,255,0.8)"></div><span class="t" style="left:29px;top:79.4px;font-size:316px;line-height:316px;color:#1f1f1f;-webkit-text-stroke:1.3px #1f1f1f;transform:scaleX(0.955);transform-origin:0 0;">U</span><svg style="left:0;top:0" width="496" height="695"><defs><linearGradient id="pk" x1="0" x2="1" y1="0" y2="0"><stop offset="0" stop-color="#ea4b7e"/><stop offset="0.6" stop-color="#e6487a"/><stop offset="1" stop-color="#d7416f"/></linearGradient></defs><path d="M147.1 387.7C151.5 387.8 155.6 388.8 159.5 391.6C163.4 394.4 166.9 399.8 170.3 404.8C173.6 409.8 177.0 415.6 179.6 421.8C182.2 428.0 184.5 436.0 185.8 441.9C187.1 447.8 187.4 452.5 187.3 457.4C187.2 462.3 185.9 466.6 185.0 471.3C184.1 475.9 182.4 481.3 181.9 485.3C181.4 489.3 181.2 493.0 181.9 495.3C182.5 497.6 184.1 499.1 185.8 499.2C187.5 499.3 190.1 497.9 192.0 496.1C193.9 494.3 195.2 491.8 197.4 488.4C199.6 485.0 201.7 475.7 205.0 476.0C208.3 476.3 215.0 481.0 217.0 490.0C219.0 499.0 219.0 522.0 217.0 530.0C215.0 538.0 208.2 535.7 205.0 538.0C201.8 540.3 199.9 542.0 197.7 544.0C195.5 546.0 193.7 547.9 192.0 550.0C190.3 552.1 189.5 552.8 187.7 556.7C185.9 560.6 182.5 567.8 181.0 573.3C179.5 578.8 178.6 585.0 178.5 590.0C178.4 595.0 179.7 598.8 180.2 603.3C180.8 607.8 181.9 613.4 181.8 616.7C181.6 620.0 181.4 621.8 179.3 623.3C177.2 624.8 174.6 625.2 169.3 625.8C164.0 626.4 155.2 626.7 147.7 626.7C140.2 626.7 131.5 626.5 124.3 625.8C117.1 625.1 110.7 624.3 104.3 622.5C97.9 620.7 91.5 617.6 86.0 615.0C80.5 612.4 74.3 608.9 71.0 606.7C67.7 604.5 66.5 603.5 66.0 601.7C65.5 599.9 65.8 598.6 67.7 595.8C69.7 593.0 73.3 588.8 77.7 585.0C82.1 581.2 88.7 576.6 94.3 573.3C99.8 570.0 106.3 567.1 111.0 565.0C115.7 562.9 119.8 561.9 122.7 560.8C125.6 559.7 127.8 559.3 128.5 558.3C129.2 557.3 128.6 555.9 126.8 555.0C125.0 554.1 122.6 553.1 117.7 553.0C112.9 552.9 103.8 553.5 97.7 554.2C91.6 555.0 86.6 556.8 81.0 557.5C75.4 558.2 68.7 558.6 64.3 558.3C59.8 558.0 57.3 557.5 54.3 555.8C51.2 554.1 48.0 550.8 46.0 548.3C44.0 545.8 42.7 542.9 42.3 540.8C41.9 538.7 42.1 536.8 43.5 535.8C44.9 534.8 46.1 535.0 51.0 534.7C55.9 534.4 65.5 534.0 72.7 534.2C79.9 534.4 88.7 534.9 94.3 535.8C99.9 536.7 106.2 539.8 106.2 539.8C106.2 539.8 104.7 537.1 104.3 533.3C103.8 529.4 103.8 522.2 103.5 516.7C103.2 511.2 102.9 504.7 102.7 500.0C102.5 495.3 102.0 493.9 102.2 488.4C102.4 482.8 103.0 473.9 103.8 466.7C104.6 459.5 105.4 452.5 106.9 445.0C108.4 437.5 110.4 429.0 113.0 421.8C115.6 414.6 118.9 406.9 122.3 401.7C125.7 396.5 129.1 393.1 133.2 390.8C137.3 388.5 142.7 387.6 147.1 387.7Z" fill="url(#pk)" stroke="#121212" stroke-width="3.8" stroke-linejoin="round"/></svg></div>
<div style="left:1345px;top:104px;width:7px;height:736px;background:linear-gradient(90deg,#222 0%,#262626 40%,#303030 100%);"></div>
<div style="left:1352px;top:104px;width:317.5px;height:736px;background:#404040;"></div>
<div style="left:1352px;top:100px;width:317.5px;height:29.5px;background:linear-gradient(180deg,#323232 0px,#2b2b2b 7px);"></div>
<div style="left:1426px;top:106px;width:64px;height:24px;background:#404040;"></div>
<div style="left:1359.5px;top:112.7px;width:1.5px;height:9px;background:#4c4c4c;"></div>
<div style="left:1363.5px;top:112.7px;width:1.5px;height:9px;background:#4c4c4c;"></div>
<span id="t7" class="t" style="left:1380.5px;top:109.6px;height:16px;line-height:16px;font-size:12.5px;color:#9c9c9c;font-weight:400;letter-spacing:0.134px;-webkit-text-stroke:0.45px #9c9c9c;">Colour</span>
<span id="t8" class="t" style="left:1429.9px;top:109.6px;height:16px;line-height:16px;font-size:12.5px;color:#ffffff;font-weight:700;letter-spacing:-0.339px;">Swatches</span>
<span id="t9" class="t" style="left:1498.3px;top:109.6px;height:16px;line-height:16px;font-size:12.5px;color:#9c9c9c;font-weight:400;letter-spacing:0.172px;-webkit-text-stroke:0.45px #9c9c9c;">Stroke</span>
<div style="left:1541.9px;top:111.2px;width:1px;height:12px;background:#555;"></div>
<span id="t10" class="t" style="left:1559.6px;top:109.6px;height:16px;line-height:16px;font-size:12.5px;color:#9c9c9c;font-weight:400;letter-spacing:-0.225px;-webkit-text-stroke:0.45px #9c9c9c;">Brs</span>
<div style="left:1593.5px;top:111.2px;width:1px;height:12px;background:#555;"></div>
<span id="t11" class="t" style="left:1609.2px;top:109.6px;height:16px;line-height:16px;font-size:12.5px;color:#9c9c9c;font-weight:400;letter-spacing:-0.077px;-webkit-text-stroke:0.45px #9c9c9c;">Apr</span>
<svg style="left:1649.2px;top:111.8px" width="18" height="12"><rect x="0" y="0.30" width="10.2" height="1.55" fill="#d6d6d6"/><rect x="0" y="2.80" width="10.2" height="1.55" fill="#d6d6d6"/><rect x="0" y="5.30" width="10.2" height="1.55" fill="#d6d6d6"/><rect x="0" y="7.80" width="10.2" height="1.55" fill="#d6d6d6"/><path d="M11.6 7.6h5l-2.5 3.3z" fill="#d6d6d6"/></svg>
<div style="left:1352px;top:193.5px;width:317.5px;height:237px;background:#363636;"></div>
<svg style="left:1355px;top:134px" width="110" height="56" viewBox="1355 134 110 56"><circle cx="1378.7" cy="154.8" r="15.6" fill="#222" stroke="#5a5a5a" stroke-width="1"/><circle cx="1378.7" cy="154.8" r="8.2" fill="#3c3c3c" stroke="#5a5a5a" stroke-width="1"/><circle cx="1391.4" cy="168" r="15.2" fill="#ee4a7e" stroke="#3a2a30" stroke-width="1.2"/><circle cx="1370.4" cy="177.6" r="5.8" fill="#fff" stroke="#333" stroke-width="0.8"/><path d="M1366 182L1374.8 173.2" stroke="#e8534a" stroke-width="1.4"/><path d="M1395.5 143.5C1401 144 1404.5 147.5 1405 153" fill="none" stroke="#d4d4d4" stroke-width="1.8"/><path d="M1393 143.2l4.6-3v6z" fill="#d4d4d4"/><path d="M1405.2 156l-3.2-4.6h6.2z" fill="#d4d4d4"/><g transform="translate(1420,140)"><path d="M0.4 19.2L2 14.4L9 7.4L12 10.4L5 17.4z" fill="#d2d2d6" stroke="#7c7c80" stroke-width="0.6"/><path d="M1.2 18.2L3 14.8L9.4 8.4" fill="none" stroke="#fff" stroke-width="0.9" opacity="0.8"/><path d="M7.6 6.6L13 12" stroke="#3a2a10" stroke-width="2.2" stroke-linecap="round"/><path d="M9.6 5.4L11.4 3.2C12.4 1 15.2 0.2 17.2 1.6C19.2 3 19 6 17.2 7.4L14.6 9.6z" fill="#dc9c30" stroke="#8a5a14" stroke-width="0.6"/><path d="M12.4 3.4C13.4 2 15 1.6 16.2 2.2" fill="none" stroke="#ffe08a" stroke-width="1" stroke-linecap="round"/></g><circle cx="1450.5" cy="150" r="8.8" fill="#000" stroke="#4c4c4c" stroke-width="1.2"/></svg>
<span id="t12" class="t" style="left:1529.3px;top:153.6px;height:16px;line-height:16px;font-size:12.5px;color:#e6e6e6;font-weight:400;letter-spacing:0.177px;-webkit-text-stroke:0.5px #e6e6e6;">Opacity:</span>
<div class="dd" style="left:1587.4px;top:148.8px;width:71.4px;height:25.2px;"></div>
<span id="t13" class="t" style="left:1591.4px;top:155.2px;height:16px;line-height:16px;font-size:12.5px;color:#f0f0f0;font-weight:400;letter-spacing:-0.213px;-webkit-text-stroke:0.5px #f0f0f0;">100 %</span>
<svg style="left:1647.5px;top:158.65px" width="7" height="5.5"><path d="M0 0h7l-3.5 5.5z" fill="#e0e0e0"/></svg>
<span id="t14" class="t" style="left:1360.2px;top:208.7px;height:16px;line-height:16px;font-size:12.5px;color:#e6e6e6;font-weight:400;letter-spacing:0.084px;-webkit-text-stroke:0.5px #e6e6e6;">Recent:</span>
<div style="left:1410.9px;top:208.3px;width:155.8px;height:14.6px;background:#303030;"></div>
<div style="left:1410.9px;top:208.3px;width:15.1px;height:14.6px;background:#ee4a7e;"></div>
<div class="dd" style="left:1361.3px;top:233.6px;width:165.3px;height:21.3px;"></div>
<svg style="left:1371px;top:237px" width="17" height="15" viewBox="0 0 17 15"><path d="M8.5 1.8L15 12.8H2z" fill="none" stroke="#050505" stroke-width="3.2" stroke-linejoin="round"/></svg>
<span id="t15" class="t" style="left:1395px;top:237px;height:16px;line-height:16px;font-size:12.5px;color:#f0f0f0;font-weight:400;letter-spacing:0.187px;-webkit-text-stroke:0.45px #f0f0f0;">Colours</span>
<svg style="left:1514.7px;top:237.8px" width="6" height="13"><path d="M3 0.5L5.6 4.4H0.4zM3 12.5L5.6 8.6H0.4z" fill="#d8d8d8"/></svg>
<svg style="left:1537.4px;top:236px" width="18" height="17" viewBox="0 0 18 17" fill="none" stroke="#d0d0d0" stroke-width="1.1"><rect x="0.6" y="0.6" width="6.3" height="6.3"/><rect x="10" y="0.6" width="6.3" height="6.3"/><rect x="0.6" y="10" width="6.3" height="6.3"/><path d="M3.75 2.3v3M2.25 3.75h3M13.15 2.3v3M11.65 3.75h3M3.75 11.7v3M2.25 13.15h3" stroke-width="0.9"/><path d="M13.2 9.8v7M9.7 13.3h7" stroke="#e4e4e4" stroke-width="2.2"/></svg>
<div style="left:1595.5px;top:239.3px;width:15.5px;height:14.5px;background:#fff;overflow:hidden;"><svg width="100%" height="100%" viewBox="0 0 10 10" preserveAspectRatio="none" style="left:0;top:0"><path d="M0 10L10 0" stroke="#e8534a" stroke-width="1.5" vector-effect="non-scaling-stroke"/></svg></div>
<div style="left:1611px;top:239.3px;width:15.7px;height:14.5px;background:#222;"></div>
<div style="left:1626.7px;top:239.3px;width:15.7px;height:14.5px;background:#a6a6a6;"></div>
<div style="left:1642.4px;top:239.3px;width:15.8px;height:14.5px;background:#fff;"></div>
<svg style="left:1360px;top:260px" width="290" height="130" viewBox="1360 260 290 130" shape-rendering="geometricPrecision"><rect x="1363.85" y="263.35" width="281.75" height="122.25" fill="#191919"/><rect x="1364.75" y="264.25" width="14.42" height="14.48" fill="#ea3e2a"/><rect x="1380.37" y="264.25" width="14.42" height="14.48" fill="#ee5a30"/><rect x="1395.99" y="264.25" width="14.42" height="14.48" fill="#f5a531"/><rect x="1411.61" y="264.25" width="14.42" height="14.48" fill="#ebe534"/><rect x="1427.23" y="264.25" width="14.42" height="14.48" fill="#a6cf2c"/><rect x="1442.85" y="264.25" width="14.42" height="14.48" fill="#6bbd30"/><rect x="1458.47" y="264.25" width="14.42" height="14.48" fill="#5cb82e"/><rect x="1474.09" y="264.25" width="14.42" height="14.48" fill="#6cc160"/><rect x="1489.71" y="264.25" width="14.42" height="14.48" fill="#5ec7b8"/><rect x="1505.33" y="264.25" width="14.42" height="14.48" fill="#41bdec"/><rect x="1520.94" y="264.25" width="14.42" height="14.48" fill="#2f74c4"/><rect x="1536.56" y="264.25" width="14.42" height="14.48" fill="#2e55ac"/><rect x="1552.18" y="264.25" width="14.42" height="14.48" fill="#3c4aad"/><rect x="1567.80" y="264.25" width="14.42" height="14.48" fill="#5a42a8"/><rect x="1583.42" y="264.25" width="14.42" height="14.48" fill="#9a44a4"/><rect x="1599.04" y="264.25" width="14.42" height="14.48" fill="#d63fa0"/><rect x="1614.66" y="264.25" width="14.42" height="14.48" fill="#ec4468"/><rect x="1630.28" y="264.25" width="14.42" height="14.48" fill="#ea3e2a"/><rect x="1364.75" y="279.93" width="14.42" height="14.48" fill="#ec5b32"/><rect x="1380.37" y="279.93" width="14.42" height="14.48" fill="#f3a433"/><rect x="1395.99" y="279.93" width="14.42" height="14.48" fill="#e9e336"/><rect x="1411.61" y="279.93" width="14.42" height="14.48" fill="#a5ce2e"/><rect x="1427.23" y="279.93" width="14.42" height="14.48" fill="#6cbc32"/><rect x="1442.85" y="279.93" width="14.42" height="14.48" fill="#5db730"/><rect x="1458.47" y="279.93" width="14.42" height="14.48" fill="#6dc061"/><rect x="1474.09" y="279.93" width="14.42" height="14.48" fill="#5fc6b7"/><rect x="1489.71" y="279.93" width="14.42" height="14.48" fill="#42bcea"/><rect x="1505.33" y="279.93" width="14.42" height="14.48" fill="#3174c3"/><rect x="1520.94" y="279.93" width="14.42" height="14.48" fill="#3056ab"/><rect x="1536.56" y="279.93" width="14.42" height="14.48" fill="#3d4bac"/><rect x="1552.18" y="279.93" width="14.42" height="14.48" fill="#5b43a7"/><rect x="1567.80" y="279.93" width="14.42" height="14.48" fill="#9a45a3"/><rect x="1583.42" y="279.93" width="14.42" height="14.48" fill="#d4419f"/><rect x="1599.04" y="279.93" width="14.42" height="14.48" fill="#ea4569"/><rect x="1614.66" y="279.93" width="14.42" height="14.48" fill="#e8402c"/><rect x="1630.28" y="279.93" width="14.42" height="14.48" fill="#ec5b32"/><rect x="1364.75" y="295.61" width="14.42" height="14.48" fill="#efa435"/><rect x="1380.37" y="295.61" width="14.42" height="14.48" fill="#e6e138"/><rect x="1395.99" y="295.61" width="14.42" height="14.48" fill="#a4cc30"/><rect x="1411.61" y="295.61" width="14.42" height="14.48" fill="#6cbb34"/><rect x="1427.23" y="295.61" width="14.42" height="14.48" fill="#5eb632"/><rect x="1442.85" y="295.61" width="14.42" height="14.48" fill="#6dbe62"/><rect x="1458.47" y="295.61" width="14.42" height="14.48" fill="#60c4b5"/><rect x="1474.09" y="295.61" width="14.42" height="14.48" fill="#44bbe7"/><rect x="1489.71" y="295.61" width="14.42" height="14.48" fill="#3375c1"/><rect x="1505.33" y="295.61" width="14.42" height="14.48" fill="#3258aa"/><rect x="1520.94" y="295.61" width="14.42" height="14.48" fill="#404dab"/><rect x="1536.56" y="295.61" width="14.42" height="14.48" fill="#5c46a6"/><rect x="1552.18" y="295.61" width="14.42" height="14.48" fill="#9948a2"/><rect x="1567.80" y="295.61" width="14.42" height="14.48" fill="#d2439f"/><rect x="1583.42" y="295.61" width="14.42" height="14.48" fill="#e7486a"/><rect x="1599.04" y="295.61" width="14.42" height="14.48" fill="#e5422f"/><rect x="1614.66" y="295.61" width="14.42" height="14.48" fill="#e95c34"/><rect x="1630.28" y="295.61" width="14.42" height="14.48" fill="#efa435"/><rect x="1364.75" y="311.29" width="14.42" height="14.48" fill="#e2dd3b"/><rect x="1380.37" y="311.29" width="14.42" height="14.48" fill="#a3c934"/><rect x="1395.99" y="311.29" width="14.42" height="14.48" fill="#6db938"/><rect x="1411.61" y="311.29" width="14.42" height="14.48" fill="#60b436"/><rect x="1427.23" y="311.29" width="14.42" height="14.48" fill="#6ebc63"/><rect x="1442.85" y="311.29" width="14.42" height="14.48" fill="#62c2b4"/><rect x="1458.47" y="311.29" width="14.42" height="14.48" fill="#47b9e3"/><rect x="1474.09" y="311.29" width="14.42" height="14.48" fill="#3776be"/><rect x="1489.71" y="311.29" width="14.42" height="14.48" fill="#365aa9"/><rect x="1505.33" y="311.29" width="14.42" height="14.48" fill="#4350a9"/><rect x="1520.94" y="311.29" width="14.42" height="14.48" fill="#5e49a5"/><rect x="1536.56" y="311.29" width="14.42" height="14.48" fill="#984aa1"/><rect x="1552.18" y="311.29" width="14.42" height="14.48" fill="#cf469e"/><rect x="1567.80" y="311.29" width="14.42" height="14.48" fill="#e34a6b"/><rect x="1583.42" y="311.29" width="14.42" height="14.48" fill="#e14532"/><rect x="1599.04" y="311.29" width="14.42" height="14.48" fill="#e55e38"/><rect x="1614.66" y="311.29" width="14.42" height="14.48" fill="#eba339"/><rect x="1630.28" y="311.29" width="14.42" height="14.48" fill="#e2dd3b"/><rect x="1364.75" y="326.97" width="14.42" height="14.48" fill="#a1c53a"/><rect x="1380.37" y="326.97" width="14.42" height="14.48" fill="#6fb63d"/><rect x="1395.99" y="326.97" width="14.42" height="14.48" fill="#62b13b"/><rect x="1411.61" y="326.97" width="14.42" height="14.48" fill="#70b966"/><rect x="1427.23" y="326.97" width="14.42" height="14.48" fill="#64beb0"/><rect x="1442.85" y="326.97" width="14.42" height="14.48" fill="#4bb6dd"/><rect x="1458.47" y="326.97" width="14.42" height="14.48" fill="#3c78bb"/><rect x="1474.09" y="326.97" width="14.42" height="14.48" fill="#3b5da6"/><rect x="1489.71" y="326.97" width="14.42" height="14.48" fill="#4754a7"/><rect x="1505.33" y="326.97" width="14.42" height="14.48" fill="#614da3"/><rect x="1520.94" y="326.97" width="14.42" height="14.48" fill="#974fa0"/><rect x="1536.56" y="326.97" width="14.42" height="14.48" fill="#ca4b9c"/><rect x="1552.18" y="326.97" width="14.42" height="14.48" fill="#dd4f6c"/><rect x="1567.80" y="326.97" width="14.42" height="14.48" fill="#db4a38"/><rect x="1583.42" y="326.97" width="14.42" height="14.48" fill="#de623d"/><rect x="1599.04" y="326.97" width="14.42" height="14.48" fill="#e4a13e"/><rect x="1614.66" y="326.97" width="14.42" height="14.48" fill="#dcd840"/><rect x="1630.28" y="326.97" width="14.42" height="14.48" fill="#a1c53a"/><rect x="1364.75" y="342.65" width="14.42" height="14.48" fill="#71b145"/><rect x="1380.37" y="342.65" width="14.42" height="14.48" fill="#66ad43"/><rect x="1395.99" y="342.65" width="14.42" height="14.48" fill="#72b469"/><rect x="1411.61" y="342.65" width="14.42" height="14.48" fill="#68b9ac"/><rect x="1427.23" y="342.65" width="14.42" height="14.48" fill="#52b1d4"/><rect x="1442.85" y="342.65" width="14.42" height="14.48" fill="#447ab5"/><rect x="1458.47" y="342.65" width="14.42" height="14.48" fill="#4362a3"/><rect x="1474.09" y="342.65" width="14.42" height="14.48" fill="#4e5aa4"/><rect x="1489.71" y="342.65" width="14.42" height="14.48" fill="#6554a0"/><rect x="1505.33" y="342.65" width="14.42" height="14.48" fill="#95559d"/><rect x="1520.94" y="342.65" width="14.42" height="14.48" fill="#c3519a"/><rect x="1536.56" y="342.65" width="14.42" height="14.48" fill="#d4556f"/><rect x="1552.18" y="342.65" width="14.42" height="14.48" fill="#d25140"/><rect x="1567.80" y="342.65" width="14.42" height="14.48" fill="#d56645"/><rect x="1583.42" y="342.65" width="14.42" height="14.48" fill="#da9f45"/><rect x="1599.04" y="342.65" width="14.42" height="14.48" fill="#d3d048"/><rect x="1614.66" y="342.65" width="14.42" height="14.48" fill="#9ebf42"/><rect x="1630.28" y="342.65" width="14.42" height="14.48" fill="#71b145"/><rect x="1364.75" y="358.33" width="14.42" height="14.48" fill="#6ca74f"/><rect x="1380.37" y="358.33" width="14.42" height="14.48" fill="#76ad6e"/><rect x="1395.99" y="358.33" width="14.42" height="14.48" fill="#6db1a5"/><rect x="1411.61" y="358.33" width="14.42" height="14.48" fill="#5baac5"/><rect x="1427.23" y="358.33" width="14.42" height="14.48" fill="#507dac"/><rect x="1442.85" y="358.33" width="14.42" height="14.48" fill="#4f6a9e"/><rect x="1458.47" y="358.33" width="14.42" height="14.48" fill="#58639e"/><rect x="1474.09" y="358.33" width="14.42" height="14.48" fill="#6b5e9b"/><rect x="1489.71" y="358.33" width="14.42" height="14.48" fill="#925f99"/><rect x="1505.33" y="358.33" width="14.42" height="14.48" fill="#b85c96"/><rect x="1520.94" y="358.33" width="14.42" height="14.48" fill="#c55f73"/><rect x="1536.56" y="358.33" width="14.42" height="14.48" fill="#c45c4d"/><rect x="1552.18" y="358.33" width="14.42" height="14.48" fill="#c66d51"/><rect x="1567.80" y="358.33" width="14.42" height="14.48" fill="#cb9c51"/><rect x="1583.42" y="358.33" width="14.42" height="14.48" fill="#c5c353"/><rect x="1599.04" y="358.33" width="14.42" height="14.48" fill="#9ab64e"/><rect x="1614.66" y="358.33" width="14.42" height="14.48" fill="#75aa51"/><rect x="1630.28" y="358.33" width="14.42" height="14.48" fill="#6ca74f"/><rect x="1364.75" y="374.01" width="14.42" height="10.79" fill="#7ba276"/><rect x="1380.37" y="374.01" width="14.42" height="10.79" fill="#75a59b"/><rect x="1395.99" y="374.01" width="14.42" height="10.79" fill="#69a1b1"/><rect x="1411.61" y="374.01" width="14.42" height="10.79" fill="#6182a0"/><rect x="1427.23" y="374.01" width="14.42" height="10.79" fill="#617596"/><rect x="1442.85" y="374.01" width="14.42" height="10.79" fill="#677096"/><rect x="1458.47" y="374.01" width="14.42" height="10.79" fill="#746d94"/><rect x="1474.09" y="374.01" width="14.42" height="10.79" fill="#8e6e93"/><rect x="1489.71" y="374.01" width="14.42" height="10.79" fill="#a86c91"/><rect x="1505.33" y="374.01" width="14.42" height="10.79" fill="#b16e79"/><rect x="1520.94" y="374.01" width="14.42" height="10.79" fill="#b06b5f"/><rect x="1536.56" y="374.01" width="14.42" height="10.79" fill="#b27762"/><rect x="1552.18" y="374.01" width="14.42" height="10.79" fill="#b59662"/><rect x="1567.80" y="374.01" width="14.42" height="10.79" fill="#b0b164"/><rect x="1583.42" y="374.01" width="14.42" height="10.79" fill="#93a860"/><rect x="1599.04" y="374.01" width="14.42" height="10.79" fill="#7ba162"/><rect x="1614.66" y="374.01" width="14.42" height="10.79" fill="#749e61"/><rect x="1630.28" y="374.01" width="14.42" height="10.79" fill="#7ba276"/></svg>
<div style="left:1361.9px;top:394px;width:251.8px;height:21px;background:#313131;border:1px solid #2a2a2a;border-radius:4px;box-shadow:0 1px 0 rgba(255,255,255,0.05);"></div>
<svg style="left:1369.5px;top:399px" width="13" height="13" viewBox="0 0 13 13" fill="none" stroke="#a8a8a8" stroke-width="1.5"><circle cx="5" cy="5" r="3.6"/><path d="M7.8 7.8L11.6 11.6" stroke-linecap="round"/></svg>
<div style="left:1352px;top:430.3px;width:317.5px;height:1.7px;background:#2b2b2b;"></div>
<div style="left:1352px;top:432px;width:317.5px;height:25.4px;background:#2b2b2b;"></div>
<div style="left:1374.4px;top:434px;width:64.8px;height:24px;background:#404040;"></div>
<div style="left:1359.5px;top:440.8px;width:1.5px;height:9px;background:#4c4c4c;"></div>
<div style="left:1363.5px;top:440.8px;width:1.5px;height:9px;background:#4c4c4c;"></div>
<span id="t16" class="t" style="left:1378px;top:437.7px;height:16px;line-height:16px;font-size:12.5px;color:#ffffff;font-weight:700;letter-spacing:-0.172px;">Character</span>
<svg style="left:1649.7px;top:440.1px" width="18" height="12"><rect x="0" y="0.30" width="10.2" height="1.55" fill="#d6d6d6"/><rect x="0" y="2.80" width="10.2" height="1.55" fill="#d6d6d6"/><rect x="0" y="5.30" width="10.2" height="1.55" fill="#d6d6d6"/><rect x="0" y="7.80" width="10.2" height="1.55" fill="#d6d6d6"/><path d="M11.6 7.6h5l-2.5 3.3z" fill="#d6d6d6"/></svg>
<div style="left:1352px;top:457.4px;width:317.5px;height:101.6px;background:#404040;"></div>
<div class="dd" style="left:1364.3px;top:469.6px;width:95.5px;height:23.3px;"></div>
<span id="t17" class="t" style="left:1370px;top:473.7px;height:16px;line-height:16px;font-size:12.5px;color:#f0f0f0;font-weight:400;letter-spacing:0.107px;-webkit-text-stroke:0.5px #f0f0f0;">All Fonts</span>
<svg style="left:1447.3px;top:474.8px" width="6" height="13"><path d="M3 0.5L5.6 4.4H0.4zM3 12.5L5.6 8.6H0.4z" fill="#d8d8d8"/></svg>
<div style="left:1463.9px;top:469.6px;width:195.9px;height:23.3px;background:#2f2f2f;border:1px solid #262626;border-radius:4px;"></div>
<div style="left:1639.6px;top:471.2px;width:19.2px;height:20.3px;background:#3c3c3c;border-radius:0 3px 3px 0;"></div>
<span id="t18" class="t" style="left:1469px;top:474.4px;height:16px;line-height:16px;font-size:12.5px;color:#f0f0f0;font-weight:400;letter-spacing:0.121px;-webkit-text-stroke:0.5px #f0f0f0;">Arial</span>
<svg style="left:1645.7px;top:479.5px" width="8" height="6"><path d="M0 0h8l-4.0 6z" fill="#e0e0e0"/></svg>
<div style="left:1364.3px;top:497px;width:95.5px;height:23px;background:#2f2f2f;border:1px solid #262626;border-radius:4px;"></div>
<div style="left:1439.6px;top:498.5px;width:19.2px;height:20.1px;background:#3c3c3c;border-radius:0 3px 3px 0;"></div>
<span id="t19" class="t" style="left:1367.7px;top:501.1px;height:16px;line-height:16px;font-size:12.5px;color:#f0f0f0;font-weight:400;letter-spacing:0.407px;-webkit-text-stroke:0.5px #f0f0f0;">256 pt</span>
<svg style="left:1446.3px;top:506.0px" width="8" height="6"><path d="M0 0h8l-4.0 6z" fill="#e0e0e0"/></svg>
<div class="dd" style="left:1463.9px;top:497px;width:137.2px;height:23px;"></div>
<span id="t20" class="t" style="left:1469.6px;top:501.1px;height:16px;line-height:16px;font-size:12.5px;color:#f0f0f0;font-weight:400;letter-spacing:-0.064px;-webkit-text-stroke:0.5px #f0f0f0;">Regular</span>
<svg style="left:1589px;top:502.0px" width="6" height="13"><path d="M3 0.5L5.6 4.4H0.4zM3 12.5L5.6 8.6H0.4z" fill="#d8d8d8"/></svg>
<div style="left:1605.6px;top:499.6px;width:25.9px;height:20.4px;background:#222;border:1px solid #1c1c1c;"></div>
<div style="left:1635.1px;top:499.6px;width:24.3px;height:20px;background:#fff;overflow:hidden;"><svg width="100%" height="100%" viewBox="0 0 10 10" preserveAspectRatio="none" style="left:0;top:0"><path d="M0 10L10 0" stroke="#e8534a" stroke-width="1.5" vector-effect="non-scaling-stroke"/></svg></div>
<div style="left:1364.3px;top:525.2px;width:295.5px;height:22.4px;background:#2f2f2f;border:1px solid #262626;border-radius:4px;"></div>
<div style="left:1639.6px;top:526.7px;width:19.2px;height:19.4px;background:#3c3c3c;border-radius:0 3px 3px 0;"></div>
<span id="t21" class="t" style="left:1367.7px;top:529.1px;height:16px;line-height:16px;font-size:12.5px;color:#f0f0f0;font-weight:400;letter-spacing:0.290px;-webkit-text-stroke:0.5px #f0f0f0;">[No Style]</span>
<svg style="left:1645.7px;top:534.0px" width="8" height="6"><path d="M0 0h8l-4.0 6z" fill="#e0e0e0"/></svg>
<div style="left:1352px;top:559px;width:298px;height:8.5px;background:#2d2d2d;"></div>
<div style="left:1352px;top:567.5px;width:298px;height:70.5px;background:#404040;"></div>
<div style="left:1650px;top:559px;width:19.5px;height:169.7px;background:#383838;"></div>
<div style="left:1655.8px;top:569px;width:9.1px;height:61px;background:#5c5c5c;border-radius:4.5px;"></div>
<div style="left:1365.3px;top:572.7px;width:102.2px;height:23.9px;background:#3c3c3c;border:1px solid #2a2a2a;border-radius:4px;overflow:hidden;"><div style="left:0;top:0;width:35px;height:24px;background:#242424"></div><div style="left:66.4px;top:0;width:1px;height:24px;background:#2c2c2c"></div></div>
<span id="t22" class="t" style="left:1378px;top:573.7px;height:20px;line-height:20px;font-size:15.5px;color:#f4f4f4;font-weight:400;letter-spacing:0.000px;-webkit-text-stroke:0.5px #f4f4f4;">U</span>
<span id="t23" class="t" style="left:1410.5px;top:573.7px;height:20px;line-height:20px;font-size:15.5px;color:#f4f4f4;font-weight:400;letter-spacing:0.000px;-webkit-text-stroke:0.5px #f4f4f4;">U</span>
<div style="left:1410.3px;top:592.3px;width:12px;height:1.2px;background:#e8e8e8;"></div>
<span id="t24" class="t" style="left:1443px;top:572.7px;height:20px;line-height:20px;font-size:15.5px;color:#f4f4f4;font-weight:400;letter-spacing:0.000px;-webkit-text-stroke:0.5px #f4f4f4;">U</span>
<div style="left:1442.8px;top:590.5px;width:12px;height:1px;background:#e8e8e8;"></div>
<div style="left:1442.8px;top:592.8px;width:12px;height:1px;background:#e8e8e8;"></div>
<div style="left:1475.2px;top:575.3px;width:24.7px;height:20.9px;background:#fff;overflow:hidden;"><svg width="100%" height="100%" viewBox="0 0 10 10" preserveAspectRatio="none" style="left:0;top:0"><path d="M0 10L10 0" stroke="#e8534a" stroke-width="1.5" vector-effect="non-scaling-stroke"/></svg></div>
<div style="left:1510.6px;top:572.7px;width:101.7px;height:23.9px;background:#3c3c3c;border:1px solid #2a2a2a;border-radius:4px;overflow:hidden;"><div style="left:0;top:0;width:35px;height:24px;background:#242424"></div><div style="left:67px;top:0;width:1px;height:24px;background:#2c2c2c"></div></div>
<span id="t25" class="t" style="left:1523.5px;top:574px;height:20px;line-height:20px;font-size:15.5px;color:#f4f4f4;font-weight:400;letter-spacing:0.000px;-webkit-text-stroke:0.5px #f4f4f4;">S</span>
<span id="t26" class="t" style="left:1556px;top:574px;height:20px;line-height:20px;font-size:15.5px;color:#f4f4f4;font-weight:400;letter-spacing:0.000px;-webkit-text-stroke:0.5px #f4f4f4;">S</span>
<div style="left:1555px;top:583.2px;width:13px;height:1.1px;background:#e8e8e8;"></div>
<span id="t27" class="t" style="left:1589px;top:574px;height:20px;line-height:20px;font-size:15.5px;color:#f4f4f4;font-weight:400;letter-spacing:0.000px;-webkit-text-stroke:0.5px #f4f4f4;">S</span>
<div style="left:1588px;top:581.6px;width:13px;height:1px;background:#e8e8e8;"></div>
<div style="left:1588px;top:584.6px;width:13px;height:1px;background:#e8e8e8;"></div>
<div style="left:1620.4px;top:575.3px;width:24.6px;height:20.9px;background:#fff;overflow:hidden;"><svg width="100%" height="100%" viewBox="0 0 10 10" preserveAspectRatio="none" style="left:0;top:0"><path d="M0 10L10 0" stroke="#e8534a" stroke-width="1.5" vector-effect="non-scaling-stroke"/></svg></div>
<div style="left:1365.3px;top:603px;width:247.6px;height:24.5px;background:#3e3e3e;border:1px solid #2c2c2c;border-radius:4px;"></div>
<div style="left:1372.4px;top:614.7px;width:192.3px;height:1.2px;background:#777;"></div>
<svg style="left:1458px;top:606px" width="22" height="19"><path d="M1 18L20.5 1" stroke="#d8433c" stroke-width="1.4"/></svg>
<span id="t28" class="t" style="left:1575.8px;top:608.9px;height:16px;line-height:16px;font-size:12.5px;color:#f0f0f0;font-weight:400;letter-spacing:-0.030px;-webkit-text-stroke:0.45px #f0f0f0;">None</span>
<div style="left:1620.4px;top:607.3px;width:24.6px;height:19.7px;background:#fff;overflow:hidden;"><svg width="100%" height="100%" viewBox="0 0 10 10" preserveAspectRatio="none" style="left:0;top:0"><path d="M0 10L10 0" stroke="#e8534a" stroke-width="1.5" vector-effect="non-scaling-stroke"/></svg></div>
<div style="left:1352px;top:638px;width:298px;height:26.4px;background:#2f2f2f;"></div>
<svg style="left:1363.3px;top:646.8px" width="12" height="9"><path d="M0 0h11.4l-5.7 8.6z" fill="#9a9a9a"/></svg>
<span id="t29" class="t" style="left:1380.5px;top:644px;height:16px;line-height:16px;font-size:12.5px;color:#f0f0f0;font-weight:400;letter-spacing:0.233px;-webkit-text-stroke:0.45px #f0f0f0;">Positioning and Transform</span>
<div style="left:1352px;top:664.4px;width:298px;height:64.3px;background:#404040;"></div>
<div style="left:1395px;top:671.5px;width:74.6px;height:22.2px;background:#2f2f2f;border:1px solid #262626;border-radius:4px;"></div>
<div style="left:1450.3px;top:672.5px;width:18.3px;height:20.2px;background:#3c3c3c;border-radius:0 3px 3px 0;"></div>
<span id="t30" class="t" style="left:1398.7px;top:675.5px;height:16px;line-height:16px;font-size:12.5px;color:#f0f0f0;font-weight:400;letter-spacing:1.681px;-webkit-text-stroke:0.5px #f0f0f0;">0 ‰</span>
<svg style="left:1456.4px;top:680.1px" width="8" height="6"><path d="M0 0h8l-4.0 6z" fill="#e0e0e0"/></svg>
<div style="left:1473.6px;top:672px;width:11.1px;height:21.2px;background:#363636;border:1px solid #2a2a2a;border-radius:5px;"></div>
<svg style="left:1475.65px;top:674.6px" width="7" height="16"><path d="M3.5 1L6.8 5.6H0.2zM3.5 15L6.8 10.4H0.2z" fill="#b8b8b8"/></svg>
<div style="left:1538.4px;top:671.5px;width:76.9px;height:22.2px;background:#2f2f2f;border:1px solid #262626;border-radius:4px;"></div>
<span id="t31" class="t" style="left:1541.4px;top:675.5px;height:16px;line-height:16px;font-size:12.5px;color:#f0f0f0;font-weight:400;letter-spacing:0.331px;-webkit-text-stroke:0.5px #f0f0f0;">0 °</span>
<div style="left:1619.4px;top:672px;width:11.1px;height:21.2px;background:#363636;border:1px solid #2a2a2a;border-radius:5px;"></div>
<svg style="left:1621.45px;top:674.6px" width="7" height="16"><path d="M3.5 1L6.8 5.6H0.2zM3.5 15L6.8 10.4H0.2z" fill="#b8b8b8"/></svg>
<div style="left:1395px;top:698.3px;width:74.6px;height:22.3px;background:#2f2f2f;border:1px solid #262626;border-radius:4px;"></div>
<div style="left:1450.3px;top:699.3px;width:18.3px;height:20.3px;background:#3c3c3c;border-radius:0 3px 3px 0;"></div>
<span id="t32" class="t" style="left:1398.7px;top:702.35px;height:16px;line-height:16px;font-size:12.5px;color:#f0f0f0;font-weight:400;letter-spacing:1.681px;-webkit-text-stroke:0.5px #f0f0f0;">0 ‰</span>
<svg style="left:1456.4px;top:706.95px" width="8" height="6"><path d="M0 0h8l-4.0 6z" fill="#e0e0e0"/></svg>
<div style="left:1473.6px;top:698.8px;width:11.1px;height:21.3px;background:#363636;border:1px solid #2a2a2a;border-radius:5px;"></div>
<svg style="left:1475.65px;top:701.45px" width="7" height="16"><path d="M3.5 1L6.8 5.6H0.2zM3.5 15L6.8 10.4H0.2z" fill="#b8b8b8"/></svg>
<div style="left:1538.4px;top:698.3px;width:76.9px;height:22.3px;background:#2f2f2f;border:1px solid #262626;border-radius:4px;"></div>
<span id="t33" class="t" style="left:1541.4px;top:702.35px;height:16px;line-height:16px;font-size:12.5px;color:#f0f0f0;font-weight:400;letter-spacing:0.037px;-webkit-text-stroke:0.5px #f0f0f0;">100 %</span>
<div style="left:1619.4px;top:698.8px;width:11.1px;height:21.3px;background:#363636;border:1px solid #2a2a2a;border-radius:5px;"></div>
<svg style="left:1621.45px;top:701.45px" width="7" height="16"><path d="M3.5 1L6.8 5.6H0.2zM3.5 15L6.8 10.4H0.2z" fill="#b8b8b8"/></svg>
<div style="left:1395px;top:724px;width:74.6px;height:11px;background:#2f2f2f;border:1px solid #262626;border-radius:4px;"></div>
<div style="left:1538.4px;top:724px;width:76.9px;height:11px;background:#2f2f2f;border:1px solid #262626;border-radius:4px;"></div>
<div style="left:1473.6px;top:724.5px;width:11.1px;height:11.5px;background:#363636;border:1px solid #2a2a2a;border-radius:5px;"></div>
<div style="left:1619.4px;top:724.5px;width:11.1px;height:11.5px;background:#363636;border:1px solid #2a2a2a;border-radius:5px;"></div>
<svg style="left:1370px;top:674px" width="22" height="20" viewBox="0 0 22 20" fill="none" stroke="#e0e0e0" stroke-width="1.3"><path d="M1.5 3L5.2 13L8.9 3"/><path d="M10.5 1L5.5 18" stroke-width="1"/><path d="M10.8 14L14.5 4L18.2 14M12.2 10.5h4.6"/><path d="M10.5 17.2h8.5" stroke-width="1.5"/></svg>
<svg style="left:1370px;top:700px" width="22" height="20" viewBox="0 0 22 20" fill="none" stroke="#e0e0e0" stroke-width="1.3"><path d="M1.8 2.5L5.6 12.5L9.4 2.5"/><path d="M9.6 12.5L13.4 2.5L17.2 12.5M11 9h4.8"/><path d="M1.5 17h16.5" stroke-width="1.5"/></svg>
<span id="t34" class="t" style="left:1518px;top:671.4px;height:22px;line-height:22px;font-size:17px;color:#e8e8e8;font-weight:400;letter-spacing:0.000px;font-family:&quot;Liberation Serif&quot;,serif;-webkit-text-stroke:0.5px #e8e8e8;font-style:italic;">T</span>
<span id="t35" class="t" style="left:1518.5px;top:696.4px;height:21px;line-height:21px;font-size:16px;color:#e8e8e8;font-weight:400;letter-spacing:0.000px;font-family:&quot;Liberation Serif&quot;,serif;-webkit-text-stroke:0.5px #e8e8e8;">T</span>
<div style="left:1517.5px;top:717.2px;width:13px;height:1.3px;background:#e0e0e0;"></div>
<div style="left:1352px;top:728.7px;width:317.5px;height:26.3px;background:#2b2b2b;"></div>
<div style="left:1352px;top:755px;width:317.5px;height:2px;background:#2a2a2a;"></div>
<div style="left:1422.6px;top:731px;width:48px;height:24px;background:#404040;"></div>
<div style="left:1359.5px;top:738.8px;width:1.5px;height:9px;background:#4c4c4c;"></div>
<div style="left:1363.5px;top:738.8px;width:1.5px;height:9px;background:#4c4c4c;"></div>
<span id="t36" class="t" style="left:1378px;top:735.7px;height:16px;line-height:16px;font-size:12.5px;color:#9c9c9c;font-weight:400;letter-spacing:-0.046px;-webkit-text-stroke:0.45px #9c9c9c;">Layers</span>
<span id="t37" class="t" style="left:1426px;top:735.7px;height:16px;line-height:16px;font-size:12.5px;color:#fff;font-weight:700;letter-spacing:-0.198px;">Effects</span>
<span id="t38" class="t" style="left:1476.6px;top:735.7px;height:16px;line-height:16px;font-size:12.5px;color:#9c9c9c;font-weight:400;letter-spacing:0.211px;-webkit-text-stroke:0.45px #9c9c9c;">Styles</span>
<div style="left:1516.5px;top:737.3px;width:1px;height:12px;background:#555;"></div>
<span id="t39" class="t" style="left:1522.8px;top:735.7px;height:16px;line-height:16px;font-size:12.5px;color:#9c9c9c;font-weight:400;letter-spacing:0.176px;-webkit-text-stroke:0.45px #9c9c9c;">Text Styles</span>
<div style="left:1589.9px;top:737.3px;width:1px;height:12px;background:#555;"></div>
<span id="t40" class="t" style="left:1595px;top:735.7px;height:16px;line-height:16px;font-size:12.5px;color:#9c9c9c;font-weight:400;letter-spacing:0.284px;-webkit-text-stroke:0.45px #9c9c9c;">Stock</span>
<div style="left:1352px;top:757px;width:317.5px;height:27.4px;background:#2b2b2b;"></div>
<div style="left:1374.4px;top:759.5px;width:65.8px;height:25.5px;background:#404040;"></div>
<div style="left:1359.5px;top:767.3px;width:1.5px;height:9px;background:#4c4c4c;"></div>
<div style="left:1363.5px;top:767.3px;width:1.5px;height:9px;background:#4c4c4c;"></div>
<span id="t41" class="t" style="left:1378.5px;top:764.2px;height:16px;line-height:16px;font-size:12.5px;color:#fff;font-weight:700;letter-spacing:-0.430px;">Transform</span>
<span id="t42" class="t" style="left:1446.7px;top:764.2px;height:16px;line-height:16px;font-size:12.5px;color:#9c9c9c;font-weight:400;letter-spacing:0.299px;-webkit-text-stroke:0.45px #9c9c9c;">History</span>
<div style="left:1492.3px;top:765.8px;width:1px;height:12px;background:#555;"></div>
<span id="t43" class="t" style="left:1498.3px;top:764.2px;height:16px;line-height:16px;font-size:12.5px;color:#9c9c9c;font-weight:400;letter-spacing:0.150px;-webkit-text-stroke:0.45px #9c9c9c;">Navigator</span>
<div style="left:1352px;top:784.4px;width:317.5px;height:55.6px;background:#404040;"></div>
<div style="left:1375.5px;top:812.9px;width:39px;height:32.1px;background:#656565;"></div>
<div style="left:1372.9px;top:809px;width:6px;height:6px;background:#545454;"></div>
<div style="left:1392.4px;top:809px;width:6px;height:6px;background:#545454;"></div>
<div style="left:1412px;top:809px;width:6px;height:6px;background:#545454;"></div>
<div style="left:1372.9px;top:828.7px;width:6px;height:6px;background:#545454;"></div>
<div style="left:1412px;top:828.7px;width:6px;height:6px;background:#545454;"></div>
<div style="left:1392.4px;top:828.7px;width:6px;height:6px;background:#545454;"></div>
<span id="t44" class="t" style="left:1440.6px;top:801.1px;height:16px;line-height:16px;font-size:12.5px;color:#e6e6e6;font-weight:400;letter-spacing:-0.713px;-webkit-text-stroke:0.5px #e6e6e6;">X:</span>
<div style="left:1456.4px;top:797.5px;width:71.5px;height:21.3px;background:#303030;border:1px solid #272727;border-radius:4px;"></div>
<span id="t45" class="t" style="left:1459.8px;top:801.1px;height:16px;line-height:16px;font-size:12.5px;color:#8a8a8a;font-weight:400;letter-spacing:0.150px;-webkit-text-stroke:0.5px #8a8a8a;">0 mm</span>
<span id="t46" class="t" style="left:1539px;top:801.1px;height:16px;line-height:16px;font-size:12.5px;color:#e6e6e6;font-weight:400;letter-spacing:-1.447px;-webkit-text-stroke:0.5px #e6e6e6;">W:</span>
<div style="left:1557px;top:797.5px;width:71.5px;height:21.3px;background:#303030;border:1px solid #272727;border-radius:4px;"></div>
<span id="t47" class="t" style="left:1560.5px;top:801.1px;height:16px;line-height:16px;font-size:12.5px;color:#8a8a8a;font-weight:400;letter-spacing:0.083px;-webkit-text-stroke:0.5px #8a8a8a;">0 mm</span>
<span id="t48" class="t" style="left:1441px;top:828.4px;height:16px;line-height:16px;font-size:12.5px;color:#e6e6e6;font-weight:400;letter-spacing:-0.425px;-webkit-text-stroke:0.5px #e6e6e6;">Y:</span>
<div style="left:1456.4px;top:824.9px;width:71.5px;height:21.1px;background:#303030;border:1px solid #272727;border-radius:4px;"></div>
<span id="t49" class="t" style="left:1459.8px;top:828.4px;height:16px;line-height:16px;font-size:12.5px;color:#8a8a8a;font-weight:400;letter-spacing:0.150px;-webkit-text-stroke:0.5px #8a8a8a;">0 mm</span>
<span id="t50" class="t" style="left:1540.5px;top:828.4px;height:16px;line-height:16px;font-size:12.5px;color:#e6e6e6;font-weight:400;letter-spacing:-0.400px;-webkit-text-stroke:0.5px #e6e6e6;">H:</span>
<div style="left:1557px;top:824.9px;width:71.5px;height:21.1px;background:#303030;border:1px solid #272727;border-radius:4px;"></div>
<span id="t51" class="t" style="left:1560.5px;top:828.4px;height:16px;line-height:16px;font-size:12.5px;color:#8a8a8a;font-weight:400;letter-spacing:0.083px;-webkit-text-stroke:0.5px #8a8a8a;">0 mm</span>
<svg style="left:1640px;top:812px" width="10" height="20" viewBox="0 0 10 20" fill="none" stroke="#8c8c8c" stroke-width="1.4"><ellipse cx="4.4" cy="5.6" rx="1.9" ry="3.4"/><ellipse cx="4.4" cy="13.8" rx="1.9" ry="3.4"/><path d="M4.4 8v3.4" stroke-width="1.2"/></svg>
<div style="left:656.5px;top:235.8px;width:371px;height:526.8px;background:#323232;border-radius:10.5px;border:1px solid #585858;box-shadow:0 0 0 1px #141414,0 10px 28px rgba(0,0,0,0.6),0 0 8px rgba(0,0,0,0.35);"></div>
<span id="t52" class="t" style="left:800px;top:245.1px;height:16px;line-height:16px;font-size:12.5px;color:#e8e8e8;font-weight:700;letter-spacing:0.197px;">Global Colour</span>
<span id="t53" class="t" style="left:670px;top:282.9px;height:16px;line-height:16px;font-size:12.5px;color:#e0e0e0;font-weight:400;letter-spacing:-0.082px;-webkit-text-stroke:0.5px #e0e0e0;">Name:</span>
<div style="left:670px;top:305.7px;width:290.7px;height:23.9px;background:#313131;border:1px solid #2a2a2a;box-shadow:0 1px 0 rgba(255,255,255,0.05);"></div>
<span id="t54" class="t" style="left:674.6px;top:310.1px;height:21px;line-height:21px;font-size:16px;color:#f4f4f4;font-weight:400;letter-spacing:-0.032px;-webkit-text-stroke:0.5px #f4f4f4;">Spot UV</span>
<div style="left:734.6px;top:309.5px;width:1.2px;height:20px;background:#e8e8e8;"></div>
<div style="left:971px;top:285px;width:44.7px;height:45.7px;background:#ef8a2e;"></div>
<div class="dd" style="left:670.7px;top:354.8px;width:269.3px;height:23.8px;"></div>
<span id="t55" class="t" style="left:676px;top:359.3px;height:16px;line-height:16px;font-size:12.5px;color:#f0f0f0;font-weight:400;letter-spacing:0.018px;-webkit-text-stroke:0.5px #f0f0f0;">CMYK Sliders</span>
<svg style="left:927.7px;top:360.0px" width="6" height="13"><path d="M3 0.5L5.6 4.4H0.4zM3 12.5L5.6 8.6H0.4z" fill="#d8d8d8"/></svg>
<svg style="left:979px;top:359px" width="42" height="22" viewBox="979 359 42 22"><g transform="translate(980,360)"><path d="M0.4 19.2L2 14.4L9 7.4L12 10.4L5 17.4z" fill="#d2d2d6" stroke="#7c7c80" stroke-width="0.6"/><path d="M1.2 18.2L3 14.8L9.4 8.4" fill="none" stroke="#fff" stroke-width="0.9" opacity="0.8"/><path d="M7.6 6.6L13 12" stroke="#3a2a10" stroke-width="2.2" stroke-linecap="round"/><path d="M9.6 5.4L11.4 3.2C12.4 1 15.2 0.2 17.2 1.6C19.2 3 19 6 17.2 7.4L14.6 9.6z" fill="#dc9c30" stroke="#8a5a14" stroke-width="0.6"/><path d="M12.4 3.4C13.4 2 15 1.6 16.2 2.2" fill="none" stroke="#ffe08a" stroke-width="1" stroke-linecap="round"/></g><circle cx="1011" cy="369.3" r="8.6" fill="#000" stroke="#4c4c4c" stroke-width="1.2"/></svg>
<span id="t56" class="t" style="left:665.9px;top:395.1px;height:16px;line-height:16px;font-size:12px;color:#d6d6d6;font-weight:400;letter-spacing:0.000px;-webkit-text-stroke:0.5px #d6d6d6;">C</span>
<div style="left:682.3px;top:399px;width:288px;height:8.6px;background:#1c1208;border-radius:4.3px;box-shadow:0 1px 0 rgba(160,160,175,0.55);"></div>
<div style="left:682.9px;top:399.6px;width:286.8px;height:7.6px;background:linear-gradient(90deg,#ef8a2e 0%,#d98a2e 30%,#a8883a 58%,#5a7d3c 82%,#2b6f3d 100%);border-radius:3.9px;"></div>
<svg style="left:681px;top:395.3px" width="16" height="16"><circle cx="8" cy="8" r="6.6" fill="rgba(20,20,20,0.55)"/><circle cx="8" cy="8" r="4.2" fill="#3a2208"/><circle cx="8" cy="8" r="3.1" fill="#ef8a2e"/><circle cx="8" cy="8" r="5.2" fill="none" stroke="#f4f2f0" stroke-width="1.8"/></svg>
<div style="left:976.7px;top:392.7px;width:41.6px;height:21.4px;background:#2f2f2f;border:1px solid #282828;border-radius:3px;box-shadow:0 1px 0 rgba(255,255,255,0.05);"></div>
<span id="t57" class="t" style="left:980.6px;top:396.5px;height:16px;line-height:16px;font-size:12.5px;color:#f0f0f0;font-weight:400;letter-spacing:0.000px;-webkit-text-stroke:0.5px #f0f0f0;">0</span>
<span id="t58" class="t" style="left:665.9px;top:420.5px;height:16px;line-height:16px;font-size:12px;color:#d6d6d6;font-weight:400;letter-spacing:0.000px;-webkit-text-stroke:0.5px #d6d6d6;">M</span>
<div style="left:682.3px;top:424.4px;width:288px;height:8.6px;background:#1c1208;border-radius:4.3px;box-shadow:0 1px 0 rgba(160,160,175,0.55);"></div>
<div style="left:682.9px;top:425px;width:286.8px;height:7.6px;background:linear-gradient(90deg,#f6e92a 0%,#f7c52c 30%,#f1902e 57%,#ec5f30 80%,#e8412f 100%);border-radius:3.9px;"></div>
<svg style="left:838.7px;top:420.7px" width="16" height="16"><circle cx="8" cy="8" r="6.6" fill="rgba(20,20,20,0.55)"/><circle cx="8" cy="8" r="4.2" fill="#3a2208"/><circle cx="8" cy="8" r="3.1" fill="#ef8a2e"/><circle cx="8" cy="8" r="5.2" fill="none" stroke="#f4f2f0" stroke-width="1.8"/></svg>
<div style="left:976.7px;top:418.1px;width:41.6px;height:21.4px;background:#2f2f2f;border:1px solid #282828;border-radius:3px;box-shadow:0 1px 0 rgba(255,255,255,0.05);"></div>
<span id="t59" class="t" style="left:980.6px;top:421.9px;height:16px;line-height:16px;font-size:12.5px;color:#f0f0f0;font-weight:400;letter-spacing:-1.506px;-webkit-text-stroke:0.5px #f0f0f0;">57</span>
<span id="t60" class="t" style="left:665.9px;top:445.8px;height:16px;line-height:16px;font-size:12px;color:#d6d6d6;font-weight:400;letter-spacing:0.000px;-webkit-text-stroke:0.5px #d6d6d6;">Y</span>
<div style="left:682.3px;top:449.7px;width:288px;height:8.6px;background:#1c1208;border-radius:4.3px;box-shadow:0 1px 0 rgba(160,160,175,0.55);"></div>
<div style="left:682.9px;top:450.3px;width:286.8px;height:7.6px;background:linear-gradient(90deg,#f28bb8 0%,#f18b90 40%,#f08a5c 75%,#ef8a2e 100%);border-radius:3.9px;"></div>
<svg style="left:956px;top:446px" width="16" height="16"><circle cx="8" cy="8" r="6.6" fill="rgba(20,20,20,0.55)"/><circle cx="8" cy="8" r="4.2" fill="#3a2208"/><circle cx="8" cy="8" r="3.1" fill="#ef8a2e"/><circle cx="8" cy="8" r="5.2" fill="none" stroke="#f4f2f0" stroke-width="1.8"/></svg>
<div style="left:976.7px;top:443.4px;width:41.6px;height:21.4px;background:#2f2f2f;border:1px solid #282828;border-radius:3px;box-shadow:0 1px 0 rgba(255,255,255,0.05);"></div>
<span id="t61" class="t" style="left:980.6px;top:447.2px;height:16px;line-height:16px;font-size:12.5px;color:#f0f0f0;font-weight:400;letter-spacing:-0.930px;-webkit-text-stroke:0.5px #f0f0f0;">100</span>
<span id="t62" class="t" style="left:665.9px;top:470.5px;height:16px;line-height:16px;font-size:12px;color:#d6d6d6;font-weight:400;letter-spacing:0.000px;-webkit-text-stroke:0.5px #d6d6d6;">K</span>
<div style="left:682.3px;top:474.4px;width:288px;height:8.6px;background:#1c1208;border-radius:4.3px;box-shadow:0 1px 0 rgba(160,160,175,0.55);"></div>
<div style="left:682.9px;top:475px;width:286.8px;height:7.6px;background:linear-gradient(90deg,#ef8a2e 0%,#b86a22 35%,#6f3f12 70%,#2a1605 100%);border-radius:3.9px;"></div>
<svg style="left:681px;top:470.7px" width="16" height="16"><circle cx="8" cy="8" r="6.6" fill="rgba(20,20,20,0.55)"/><circle cx="8" cy="8" r="4.2" fill="#3a2208"/><circle cx="8" cy="8" r="3.1" fill="#ef8a2e"/><circle cx="8" cy="8" r="5.2" fill="none" stroke="#f4f2f0" stroke-width="1.8"/></svg>
<div style="left:976.7px;top:468.1px;width:41.6px;height:21.4px;background:#2f2f2f;border:1px solid #282828;border-radius:3px;box-shadow:0 1px 0 rgba(255,255,255,0.05);"></div>
<span id="t63" class="t" style="left:980.6px;top:471.9px;height:16px;line-height:16px;font-size:12.5px;color:#f0f0f0;font-weight:400;letter-spacing:0.000px;-webkit-text-stroke:0.5px #f0f0f0;">0</span>
<div style="left:667.7px;top:498.3px;width:349.7px;height:114.1px;background:linear-gradient(180deg,rgba(255,255,255,1) 0%,rgba(255,255,255,0.96) 3%,rgba(255,255,255,0.7) 11%,rgba(255,255,255,0.33) 25%,rgba(255,255,255,0.06) 40%,rgba(255,255,255,0) 47%,rgba(0,0,0,0) 55%,rgba(0,0,0,0.17) 67%,rgba(0,0,0,0.48) 79%,rgba(0,0,0,0.84) 90%,rgba(0,0,0,1) 98%),linear-gradient(90deg,#e8402c 0%,#f5922c 9%,#fdeb30 16%,#b4cf2a 23%,#5db431 33%,#4fb04a 42%,#4dbb9a 49%,#45c0f0 54%,#2f6ec0 60%,#2b4a9e 66%,#3a3f9a 72%,#7a3a9c 80%,#c43f9c 87%,#ee4389 92%,#e8402c 100%);border:1px solid #1e1e1e;"></div>
<div style="left:658.2px;top:624.3px;width:368.5px;height:62.4px;background:#383838;border:1px solid #4c4c4c;border-radius:5px;"></div>
<div style="left:696px;top:631.8px;width:15.4px;height:15.2px;background:#4a4a4a;border:1px solid #303030;border-radius:3px;box-shadow:inset 0 1px 0 rgba(255,255,255,0.12);"></div>
<svg style="left:696px;top:631px" width="16" height="16" viewBox="0 0 16 16"><path d="M3.8 8.4L6.8 12L12.2 3.4" fill="none" stroke="#fff" stroke-width="1.7" stroke-linecap="round" stroke-linejoin="round"/></svg>
<span id="t64" class="t" style="left:716.8px;top:632.2px;height:16px;line-height:16px;font-size:12.5px;color:#f0f0f0;font-weight:400;letter-spacing:0.360px;-webkit-text-stroke:0.5px #f0f0f0;">Spot</span>
<div style="left:696px;top:655.5px;width:15.4px;height:15.2px;background:#444;border:1px solid #303030;border-radius:3px;box-shadow:inset 0 1px 0 rgba(255,255,255,0.12);"></div>
<span id="t65" class="t" style="left:716.8px;top:656.4px;height:16px;line-height:16px;font-size:12.5px;color:#f0f0f0;font-weight:400;letter-spacing:0.349px;-webkit-text-stroke:0.5px #f0f0f0;">Overprint</span>
<div style="left:834.6px;top:729.3px;width:85px;height:23.9px;background:#3a3a3a;border:1px solid #282828;border-radius:4px;box-shadow:inset 0 1px 0 rgba(255,255,255,0.08);"></div>
<span id="t66" class="t" style="left:857px;top:733.4px;height:16px;line-height:16px;font-size:12.5px;color:#f0f0f0;font-weight:400;letter-spacing:0.096px;-webkit-text-stroke:0.5px #f0f0f0;">Cancel</span>
<div style="left:932.9px;top:729.3px;width:85px;height:23.9px;background:#3a3a3a;border:1px solid #282828;border-radius:4px;box-shadow:inset 0 1px 0 rgba(255,255,255,0.08);"></div>
<span id="t67" class="t" style="left:964px;top:733.4px;height:16px;line-height:16px;font-size:12.5px;color:#f0f0f0;font-weight:400;letter-spacing:-0.275px;-webkit-text-stroke:0.5px #f0f0f0;">Add</span>
</div>
<div id="ov">
<svg style="left:0;top:0" width="1680" height="840"><rect x="15.6" y="1.6" width="1653.4" height="860" rx="10.5" fill="none" stroke="rgba(255,255,255,0.13)" stroke-width="1.1"/></svg>
<div style="left:1640px;top:101px;width:32.7px;height:33px;border:4.2px solid #ea4a2c;"></div>
</div>
</body></html>
